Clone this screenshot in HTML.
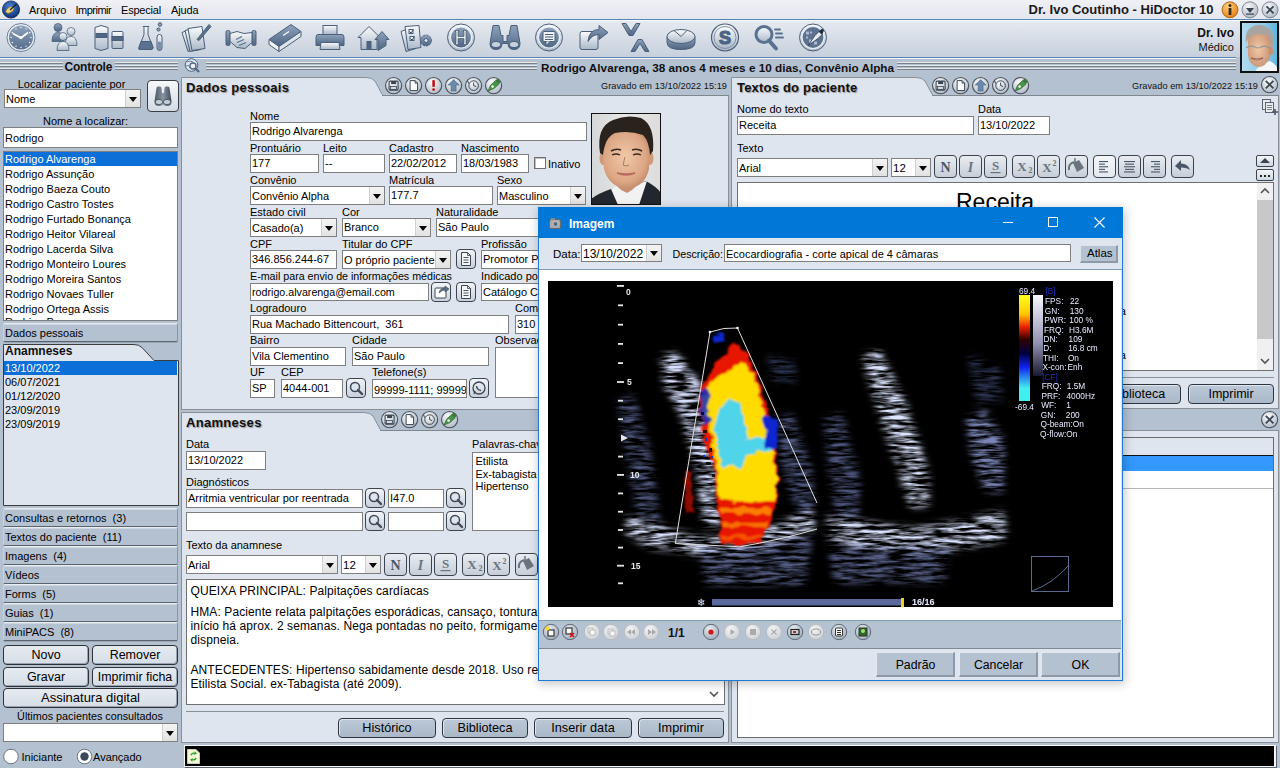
<!DOCTYPE html><html><head><meta charset="utf-8"><style>
html,body{margin:0;padding:0}
body{-webkit-font-smoothing:antialiased;width:1280px;height:768px;position:relative;overflow:hidden;background:#b4c1d1;font-family:'Liberation Sans',sans-serif;font-size:11px;color:#000}
.a{position:absolute}
.t{position:absolute;white-space:pre;line-height:normal}
svg{position:absolute;overflow:visible}
</style></head><body>
<div class=a style="left:0px;top:0px;width:1280px;height:19px;background:linear-gradient(#f0f0f6,#e4e6ee)"></div><div class=a style="left:0px;top:19px;width:1280px;height:1px;background:#5b84b4"></div><div class=a style="left:0px;top:20px;width:1280px;height:1px;background:#fbfcfd"></div><div class=a style="left:0px;top:21px;width:1280px;height:36px;background:linear-gradient(#e6eaf0,#d3dae4 60%,#c6d0dc)"></div><div class=a style="left:0px;top:57px;width:1236px;height:1px;background:#5b84b4"></div><div class=a style="left:0px;top:58px;width:1236px;height:1px;background:#f4f6f9"></div><div class=a style="left:181px;top:77px;width:548px;height:18px;background:#b4c1d1"></div><svg style='left:181px;top:77px' width='222' height='19'><path d='M0.5 19 L0.5 0.5 L185 0.5 Q191 0.5 194 4 L202 19 Z' fill='#dfe5ee' stroke='#8a8f96' stroke-width='1'/></svg><div class=a style="left:181px;top:95px;width:548px;height:315px;background:#dfe5ee;border:1px solid #8a8f96;border-top:1px solid #80868e;box-sizing:border-box"></div><svg style='left:181px;top:77px' width='210' height='20'><rect x='1' y='17' width='200' height='3' fill='#dfe5ee'/></svg><div class=a style="left:731px;top:77px;width:548px;height:18px;background:#b4c1d1"></div><svg style='left:731px;top:77px' width='222' height='19'><path d='M0.5 19 L0.5 0.5 L185 0.5 Q191 0.5 194 4 L202 19 Z' fill='#dfe5ee' stroke='#8a8f96' stroke-width='1'/></svg><div class=a style="left:731px;top:95px;width:548px;height:314px;background:#dfe5ee;border:1px solid #8a8f96;border-top:1px solid #80868e;box-sizing:border-box"></div><svg style='left:731px;top:77px' width='210' height='20'><rect x='1' y='17' width='200' height='3' fill='#dfe5ee'/></svg><div class=a style="left:181px;top:412px;width:548px;height:18px;background:#b4c1d1"></div><svg style='left:181px;top:412px' width='220' height='19'><path d='M0.5 19 L0.5 0.5 L183 0.5 Q189 0.5 192 4 L200 19 Z' fill='#dfe5ee' stroke='#8a8f96' stroke-width='1'/></svg><div class=a style="left:181px;top:430px;width:548px;height:313px;background:#dfe5ee;border:1px solid #8a8f96;border-top:1px solid #80868e;box-sizing:border-box"></div><svg style='left:181px;top:412px' width='208' height='20'><rect x='1' y='17' width='198' height='3' fill='#dfe5ee'/></svg><div class=a style="left:731px;top:409px;width:548px;height:22px;background:#b4c1d1"></div><div class=a style="left:731px;top:430px;width:548px;height:313px;background:#dfe5ee;border:1px solid #8a8f96;box-sizing:border-box"></div><div class=a style="left:184px;top:745px;width:1092px;height:22px;background:#f4f6f8;box-shadow:1px 1px 0 #5a6470"></div><div class=a style="left:185px;top:746px;width:1089px;height:20px;background:#000"></div><svg style='left:1px;top:0px' width='20' height='20'><defs><radialGradient id='apg' cx='0.45' cy='0.35' r='0.7'><stop offset='0' stop-color='#4a86d8'/><stop offset='1' stop-color='#0a2a6a'/></radialGradient></defs>
<circle cx='10' cy='9.5' r='8.6' fill='url(#apg)' stroke='#0c2450' stroke-width='0.8'/>
<path d='M4.5 12 Q6 7 11 6.5 L13 8.5 Q12 12.5 7 13.5 Z' fill='#f0d080' stroke='#8a6a20' stroke-width='0.6'/>
<path d='M9 10 L15.5 4' stroke='#222' stroke-width='1.3'/></svg><div class=t style="left:29px;top:4.04px;font-size:11px;font-weight:normal;color:#000;">Arquivo</div><div class=t style="left:75.5px;top:4.04px;font-size:11px;font-weight:normal;color:#000;letter-spacing:-0.5px;">Imprimir</div><div class=t style="left:121px;top:4.04px;font-size:11px;font-weight:normal;color:#000;letter-spacing:-0.2px;">Especial</div><div class=t style="left:171px;top:4.04px;font-size:11px;font-weight:normal;color:#000;letter-spacing:-0.1px;">Ajuda</div><div class=t style="right:66.5px;top:2.23px;font-size:13px;font-weight:bold;color:#1a1a1a;">Dr. Ivo Coutinho - HiDoctor 10</div><svg style='left:1220px;top:0px' width='60' height='20'>
<defs><radialGradient id='og' cx='0.4' cy='0.3' r='0.8'><stop offset='0' stop-color='#ffd08a'/><stop offset='1' stop-color='#e07800'/></radialGradient>
<radialGradient id='sg' cx='0.4' cy='0.3' r='0.8'><stop offset='0' stop-color='#f6f8fa'/><stop offset='1' stop-color='#a8b2be'/></radialGradient></defs>
<circle cx='10' cy='9.8' r='8' fill='url(#og)' stroke='#a05800' stroke-width='0.8'/>
<rect x='8.6' y='8' width='2.8' height='7' fill='#3a2a10'/><circle cx='10' cy='5.4' r='1.5' fill='#3a2a10'/>
<circle cx='30' cy='9.8' r='8' fill='url(#sg)' stroke='#6a7480' stroke-width='0.8'/>
<path d='M26 8 L34 8 L30 13 Z' fill='#3a4450'/><rect x='26' y='13.5' width='8' height='1.2' fill='#3a4450'/>
<circle cx='50' cy='9.8' r='8' fill='url(#sg)' stroke='#6a7480' stroke-width='0.8'/>
<path d='M46.5 6.3 L53.5 13.3 M53.5 6.3 L46.5 13.3' stroke='#3a4450' stroke-width='1.8'/>
</svg><svg style='left:0px;top:19px' width='840' height='38' viewBox='0 19 840 38'><defs>
<linearGradient id='dk' x1='0' y1='0' x2='0' y2='1'><stop offset='0' stop-color='#8fa3bb'/><stop offset='1' stop-color='#4d6584'/></linearGradient>
<linearGradient id='lt' x1='0' y1='0' x2='0' y2='1'><stop offset='0' stop-color='#fbfcfd'/><stop offset='1' stop-color='#aab8c8'/></linearGradient>
<linearGradient id='cl' x1='0' y1='0' x2='0' y2='1'><stop offset='0' stop-color='#8ea2ba'/><stop offset='1' stop-color='#566e8c'/></linearGradient>
</defs><g transform='translate(21,37.5)'><circle r='14' fill='#e9eef4' stroke='#6a7f99' stroke-width='1'/><circle r='12' fill='url(#cl)'/><path d='M-8 -4 L0 0.5 L7 -5' stroke='#fff' stroke-width='1.8' fill='none'/><circle r='1.6' fill='#fff'/><circle cx='10.00' cy='0.00' r='0.7' fill='#fff'/><circle cx='8.66' cy='5.00' r='0.7' fill='#fff'/><circle cx='5.00' cy='8.66' r='0.7' fill='#fff'/><circle cx='0.00' cy='10.00' r='0.7' fill='#fff'/><circle cx='-5.00' cy='8.66' r='0.7' fill='#fff'/><circle cx='-8.66' cy='5.00' r='0.7' fill='#fff'/><circle cx='-10.00' cy='0.00' r='0.7' fill='#fff'/><circle cx='-8.66' cy='-5.00' r='0.7' fill='#fff'/><circle cx='-5.00' cy='-8.66' r='0.7' fill='#fff'/><circle cx='-0.00' cy='-10.00' r='0.7' fill='#fff'/><circle cx='5.00' cy='-8.66' r='0.7' fill='#fff'/><circle cx='8.66' cy='-5.00' r='0.7' fill='#fff'/></g><g transform='translate(65,37.5)'><g stroke='#4a5f7a' stroke-width='0.8'><circle cx='-7' cy='-10' r='4' fill='url(#dk)'/><path d='M-13 4 Q-13 -5 -7 -5 Q-1 -5 -1 4 Z' fill='url(#dk)'/><circle cx='6' cy='-6' r='4' fill='url(#lt)'/><path d='M0 8 Q0 -1 6 -1 Q12 -1 12 8 Z' fill='url(#lt)'/><circle cx='-2' cy='-1' r='4' fill='url(#lt)'/><path d='M-8 13 Q-8 4 -2 4 Q4 4 4 13 Z' fill='url(#lt)'/></g></g><g transform='translate(109,37.5)'><g stroke='#4a5f7a' stroke-width='1'><path d='M-14 -10 L-8 -12 L-1 -10 L-1 11 L-8 13 L-14 11 Z' fill='url(#lt)'/><rect x='-13' y='-4' width='11' height='4' fill='#506784'/><rect x='3' y='-6' width='11' height='17' rx='1' fill='url(#lt)'/><rect x='3' y='-1' width='11' height='4' fill='#506784'/></g></g><g transform='translate(153,37.5)'><g stroke='#4a5f7a' stroke-width='1'><path d='M-10 -11 L-4 -11 L-5 -10 L-5 -3 L0 10 Q0 12 -2 12 L-13 12 Q-15 12 -14 10 L-9 -3 L-9 -10 Z' fill='url(#lt)'/><path d='M-12 4 L-2 4 L0 10 Q0 12 -2 12 L-13 12 Q-15 12 -14 10 Z' fill='#5a7290'/><rect x='4' y='-3' width='5' height='16' rx='2.5' fill='url(#lt)'/><rect x='4.5' y='4' width='4' height='8.5' rx='2' fill='#7890ac' stroke='none'/><circle cx='7' cy='-13' r='1.8' fill='#8fa3bb'/><circle cx='5.5' cy='-8' r='1.6' fill='#8fa3bb'/></g></g><g transform='translate(197,37.5)'><g stroke='#4a5f7a' stroke-width='1'><path d='M-15 -5 L-5 -9 L1 11 L-9 14 Z' fill='url(#lt)'/><path d='M-12 -7 L0 -10 L4 12 L-7 14 Z' fill='url(#lt)'/><path d='M-9 -9 L5 -11 L8 11 L-5 13 Z' fill='url(#lt)'/><path d='M0 2 L12 -13 L14 -11 L2 3 Z' fill='#5a7290'/></g></g><g transform='translate(241,37.5)'><g stroke='#4a5f7a' stroke-width='1'><rect x='-15' y='-7' width='4' height='15' rx='1.5' fill='url(#dk)'/><rect x='11' y='-7' width='4' height='15' rx='1.5' fill='url(#dk)'/><path d='M-11 -4 L-4 -6 L3 -4 L11 -5 L11 5 L4 11 L-4 10 L-11 4 Z' fill='url(#lt)'/><path d='M-5 2 L1 -1 M-4 5 L3 2 M-2 8 L5 5' stroke='#5a7290' stroke-width='1.3'/></g></g><g transform='translate(285,37.5)'><g stroke='#4a5f7a' stroke-width='1'><path d='M-16 2 L6 -13 L16 -6 L-6 9 Z' fill='url(#dk)'/><path d='M-16 2 L-6 9 L-6 14 L-16 7 Z' fill='#f4f6f8'/><path d='M-6 9 L16 -6 L16 -1 L-6 14 Z' fill='#dde3ea'/><path d='M-2 -2 L4 -6' stroke='#fff' stroke-width='1.2'/></g></g><g transform='translate(330,37.5)'><g stroke='#4a5f7a' stroke-width='1'><rect x='-7' y='-12' width='14' height='9' fill='url(#lt)'/><path d='M-12 -3 L12 -3 Q14 -3 14 0 L14 8 L-14 8 L-14 0 Q-14 -3 -12 -3 Z' fill='url(#dk)'/><path d='M-9 5 L9 5 L10 12 L-10 12 Z' fill='url(#lt)'/></g></g><g transform='translate(373,37.5)'><g stroke='#4a5f7a' stroke-width='1'><path d='M-15 0 L-4 -11 L7 0 L4 0 L4 12 L-12 12 L-12 0 Z' fill='url(#lt)'/><rect x='-6' y='4' width='4' height='8' fill='#4d6584'/><path d='M5 13 L5 2 L2 2 L9 -6 L16 2 L13 2 L13 8 Z' fill='url(#dk)'/></g></g><g transform='translate(417,37.5)'><g stroke='#4a5f7a' stroke-width='1'><path d='M-16 -6 L-6 -10 L-1 11 L-11 14 Z' fill='url(#lt)'/><path d='M-12 -11 L2 -12 L4 10 L-9 12 Z' fill='url(#lt)'/><rect x='-8' y='-8' width='4' height='4' fill='#fff'/><rect x='-7' y='-1' width='4' height='4' fill='#fff'/><path d='M-7.5 -6 L-6 -4.5 L-3.5 -8 M-6.5 1 L-5 2.5 L-2.5 -1' stroke='#344a66' fill='none'/><circle cx='9' cy='3' r='5.5' fill='url(#dk)' stroke-dasharray='2 1.2'/><circle cx='9' cy='3' r='2' fill='#e0e6ee'/></g></g><g transform='translate(461,37.5)'><circle r='13.5' fill='url(#lt)' stroke='#4a5f7a' stroke-width='1'/><circle r='10.5' fill='url(#dk)' stroke='#e8edf3' stroke-width='1.2'/><path d='M-6 -7 H-2 V-6 H-3 V-1 H3 V-6 H2 V-7 H6 V-6 H5 V6 H6 V7 H2 V6 H3 V1 H-3 V6 H-2 V7 H-6 V6 H-5 V-6 H-6 Z' fill='#eef2f6' stroke='#3a4a60' stroke-width='0.6'/></g><g transform='translate(505,37.5)'><g stroke='#4a5f7a' stroke-width='1'><path d='M-12 -12 L-6 -12 L-4 -2 L-2 -2 L-2 4 L2 4 L2 -2 L4 -2 L6 -12 L12 -12 L15 6 Q15 12 9 12 Q3 12 3 6 L-3 6 Q-3 12 -9 12 Q-15 12 -15 6 Z' fill='url(#dk)'/><ellipse cx='-9' cy='7' rx='4.5' ry='3' fill='#c8d2de'/><ellipse cx='9' cy='7' rx='4.5' ry='3' fill='#c8d2de'/></g></g><g transform='translate(549,37.5)'><circle r='13.5' fill='url(#lt)' stroke='#4a5f7a' stroke-width='1'/><circle r='10.5' fill='url(#dk)' stroke='#e8edf3' stroke-width='1.2'/><rect x='-6' y='-6' width='12' height='10' rx='1' fill='#eef2f6' stroke='#4a5f7a'/><path d='M-3 4 L-3 8 L1 4' fill='#eef2f6' stroke='#4a5f7a'/><path d='M-4 -3 H4 M-4 -0.5 H4 M-4 2 H4' stroke='#4a5f7a'/></g><g transform='translate(593,37.5)'><g stroke='#4a5f7a' stroke-width='1'><rect x='-13' y='-6' width='18' height='18' rx='2' fill='url(#lt)'/><path d='M-5 4 Q-4 -8 6 -8 L6 -12 L15 -5 L6 2 L6 -3 Q-1 -3 -5 4 Z' fill='url(#dk)'/></g></g><g transform='translate(637,37.5)'><g stroke='#4a5f7a' stroke-width='1'><path d='M-15 -14 L-11 -14 L-6 -6 L-1 -14 L3 -14 L-4 -2 L-8 -2 Z' fill='url(#dk)'/><path d='M-6 14 L-2 14 L3 6 L8 14 L12 14 L5 2 L1 2 Z' fill='url(#dk)'/></g></g><g transform='translate(681,37.5)'><g stroke='#4a5f7a' stroke-width='1'><path d='M-14 -1 L-14 5 Q-14 12 0 12 Q14 12 14 5 L14 -1' fill='url(#dk)'/><ellipse cx='0' cy='-1' rx='14' ry='7' fill='url(#lt)'/><path d='M-7 -7 L0 -1 L6 -7' fill='none'/></g></g><g transform='translate(725,37.5)'><circle r='13.5' fill='url(#lt)' stroke='#4a5f7a' stroke-width='1.2'/><circle r='11' fill='url(#lt)' stroke='#7d90a8' stroke-width='1'/><text x='0' y='6.5' text-anchor='middle' font-family='Liberation Sans' font-weight='bold' font-size='18' fill='#4d6584' stroke='#4d6584' stroke-width='1.2'>S</text></g><g transform='translate(769,37.5)'><g stroke='#4a5f7a' stroke-width='1'><circle cx='-5' cy='-3' r='8' fill='url(#lt)' stroke-width='3' stroke='#5a7290'/><path d='M0 3 L7 11' stroke='#5a7290' stroke-width='4' stroke-linecap='round'/><path d='M6 -8 H11 M7 -4 H13 M7 0 H14' stroke='#5a7290' stroke-width='2' stroke-linecap='round'/></g></g><g transform='translate(813,37.5)'><circle r='13.5' fill='url(#lt)' stroke='#4a5f7a' stroke-width='1'/><circle r='11' fill='#5d7290' stroke='#e8edf3' stroke-width='1.2'/><g fill='#aebbd0'><rect x='-7' y='-6' width='3' height='3'/><rect x='-3' y='-6' width='2' height='2'/><rect x='-7' y='-1' width='2' height='2'/><rect x='-4' y='2' width='3' height='3'/><rect x='1' y='4' width='3' height='3'/></g><path d='M-5 8 L2 -2 L6 -6 L9 -3 L5 1 Z' fill='#e8eef4' stroke='#2a3a50' stroke-width='0.8'/><path d='M6 -6 L9 -9 L11 -7 L9 -3' fill='#1e2a3a'/></g></svg><div class=t style="right:46px;top:26.14px;font-size:12px;font-weight:bold;color:#111;">Dr. Ivo</div><div class=t style="right:46px;top:41.05px;font-size:11px;font-weight:normal;color:#111;">Médico</div><svg style='left:1240px;top:21px' width='39' height='52' viewBox='0 0 39 52'><defs>
<linearGradient id='pbg' x1='0' y1='0' x2='1' y2='0'><stop offset='0' stop-color='#b4dcf0'/><stop offset='0.6' stop-color='#90c8e4'/><stop offset='1' stop-color='#58b4dc'/></linearGradient>
<radialGradient id='face' cx='0.45' cy='0.5' r='0.6'><stop offset='0' stop-color='#f0c8a8'/><stop offset='1' stop-color='#c89070'/></radialGradient>
<filter id='dbl'><feGaussianBlur stdDeviation='0.6'/></filter></defs>
<rect x='0' y='0' width='39' height='52' fill='url(#pbg)'/>
<g filter='url(#dbl)'>
<path d='M14 52 Q20 42 30 40 Q38 44 39 52 Z' fill='#f4f6f8'/>
<path d='M8 20 Q7 12 18 10 Q31 10 31 22 L30 36 Q26 46 18 46 Q9 44 8 34 Z' fill='url(#face)'/>
<ellipse cx='31' cy='30' rx='2.5' ry='4' fill='#c89070'/>
<path d='M6 22 Q4 6 18 4 Q34 4 34 22 L32 28 Q31 16 26 14 Q16 11 9 16 Z' fill='#a8a4a0'/>
<path d='M6 27 Q10 24 15 26 Q18 28 21 26 Q26 24 29 27' stroke='#909898' stroke-width='1.2' fill='none'/>
<path d='M11 37 Q17 41 23 37 Q17 39 11 37 Z' fill='#fff' stroke='#8a5040' stroke-width='0.8'/>
</g>
<rect x='1' y='1' width='37' height='50' fill='none' stroke='#111' stroke-width='2'/>
</svg><div class=a style="left:0px;top:62px;width:63px;height:1px;background:#e2e8ef"></div><div class=a style="left:0px;top:63px;width:63px;height:1px;background:#7d7f83"></div><div class=a style="left:0px;top:65px;width:63px;height:1px;background:#e2e8ef"></div><div class=a style="left:0px;top:66px;width:63px;height:1px;background:#7d7f83"></div><div class=a style="left:0px;top:68px;width:63px;height:1px;background:#e2e8ef"></div><div class=a style="left:0px;top:69px;width:63px;height:1px;background:#7d7f83"></div><div class=a style="left:115px;top:62px;width:65px;height:1px;background:#e2e8ef"></div><div class=a style="left:115px;top:63px;width:65px;height:1px;background:#7d7f83"></div><div class=a style="left:115px;top:65px;width:65px;height:1px;background:#e2e8ef"></div><div class=a style="left:115px;top:66px;width:65px;height:1px;background:#7d7f83"></div><div class=a style="left:115px;top:68px;width:65px;height:1px;background:#e2e8ef"></div><div class=a style="left:115px;top:69px;width:65px;height:1px;background:#7d7f83"></div><div class=t style="left:64.5px;top:60.14px;font-size:12px;font-weight:bold;color:#111;letter-spacing:-0.2px;">Controle</div><svg style='left:184px;top:58px' width='17' height='16'><circle cx='7.5' cy='7' r='6.3' fill='#dfe6ee' stroke='#4e6684' stroke-width='1'/><path d='M3 4 Q6 2 9 4 M2 8 Q5 6 6 10' stroke='#4e6684' fill='none' stroke-width='0.8'/><circle cx='9' cy='8' r='3' fill='#eef2f6' stroke='#4e6684' stroke-width='1.3'/><path d='M11 10 L15 14' stroke='#4e6684' stroke-width='2'/></svg><div class=a style="left:206px;top:62px;width:331px;height:1px;background:#e2e8ef"></div><div class=a style="left:206px;top:63px;width:331px;height:1px;background:#7d7f83"></div><div class=a style="left:206px;top:65px;width:331px;height:1px;background:#e2e8ef"></div><div class=a style="left:206px;top:66px;width:331px;height:1px;background:#7d7f83"></div><div class=a style="left:206px;top:68px;width:331px;height:1px;background:#e2e8ef"></div><div class=a style="left:206px;top:69px;width:331px;height:1px;background:#7d7f83"></div><div class=a style="left:897px;top:62px;width:339px;height:1px;background:#e2e8ef"></div><div class=a style="left:897px;top:63px;width:339px;height:1px;background:#7d7f83"></div><div class=a style="left:897px;top:65px;width:339px;height:1px;background:#e2e8ef"></div><div class=a style="left:897px;top:66px;width:339px;height:1px;background:#7d7f83"></div><div class=a style="left:897px;top:68px;width:339px;height:1px;background:#e2e8ef"></div><div class=a style="left:897px;top:69px;width:339px;height:1px;background:#7d7f83"></div><div class=t style="left:541px;top:60.87px;font-size:11.75px;font-weight:bold;color:#111;">Rodrigo Alvarenga, 38 anos 4 meses e 10 dias, Convênio Alpha</div><div class=a style="left:178px;top:59px;width:3px;height:709px;background:#b4c1d1"></div><div class=t style="left:-128.5px;width:400px;text-align:center;top:78.05px;font-size:11px;font-weight:normal;color:#000;">Localizar paciente por</div><div class=a style="left:4px;top:89px;width:137px;height:19px;background:#fff;border:1px solid #7f7f7f;box-sizing:border-box;"></div><div class=t style="left:6px;top:93.05px;font-size:11px;font-weight:normal;color:#000;">Nome</div><div class=a style="left:125px;top:90px;width:15px;height:17px;background:linear-gradient(#f4f4f4,#e2e2e2);border-left:1px solid #d0d0d0;box-sizing:border-box;"></div><div class=a style="left:128.5px;top:96.5px;width:0;height:0;border-left:4px solid transparent;border-right:4px solid transparent;border-top:5px solid #000"></div><div class=a style="left:147px;top:80px;width:32px;height:32px;background:linear-gradient(#f6f8fa,#d4dbe4);border:1px solid #3a3f46;border-radius:4px;box-sizing:border-box"></div><svg style='left:147px;top:80px' width='32' height='32'><defs><linearGradient id='bng' x1='0' y1='0' x2='1' y2='0'><stop offset='0' stop-color='#4a5664'/><stop offset='0.5' stop-color='#8a96a4'/><stop offset='1' stop-color='#3e4a58'/></linearGradient></defs>
<path d='M9.5 8 Q9.5 6.5 11 6.5 L13 6.5 Q14.5 6.5 14.5 8 L15 13 L17 13 L17.5 8 Q17.5 6.5 19 6.5 L21 6.5 Q22.5 6.5 22.5 8 L24.5 21 Q25 26 20 26 Q15.5 26 15.5 22 L16.5 22 Q16.5 20 15 20 Q13.5 20 13.5 22 L16.5 22 Q16.5 26 12 26 Q7 26 7.5 21 Z' fill='url(#bng)'/>
<ellipse cx='12' cy='22' rx='3.8' ry='2.6' fill='#c4ccd6' stroke='#3e4a58' stroke-width='0.8'/><ellipse cx='20' cy='22' rx='3.8' ry='2.6' fill='#c4ccd6' stroke='#3e4a58' stroke-width='0.8'/></svg><div class=t style="left:-114.5px;width:400px;text-align:center;top:115.05px;font-size:11px;font-weight:normal;color:#000;">Nome a localizar:</div><div class=a style="left:3px;top:127px;width:175px;height:21px;background:#fff;border:1px solid #7f7f7f;box-sizing:border-box;"></div><div class=t style="left:5px;top:132.04px;font-size:11px;font-weight:normal;color:#000;">Rodrigo</div><div class=a style="left:3px;top:151px;width:175px;height:170px;background:#fff;border:1px solid #7f7f7f;box-sizing:border-box;overflow:hidden"></div><div class=a style="left:4px;top:152px;width:173px;height:14px;background:#0a6fd6"></div><div class=t style="left:5px;top:153.04px;font-size:11px;font-weight:normal;color:#fff;">Rodrigo Alvarenga</div><div class=t style="left:5px;top:168.04px;font-size:11px;font-weight:normal;color:#000;">Rodrigo Assunção</div><div class=t style="left:5px;top:183.04px;font-size:11px;font-weight:normal;color:#000;">Rodrigo Baeza Couto</div><div class=t style="left:5px;top:198.04px;font-size:11px;font-weight:normal;color:#000;">Rodrigo Castro Tostes</div><div class=t style="left:5px;top:213.04px;font-size:11px;font-weight:normal;color:#000;">Rodrigo Furtado Bonança</div><div class=t style="left:5px;top:228.04px;font-size:11px;font-weight:normal;color:#000;">Rodrigo Heitor Vilareal</div><div class=t style="left:5px;top:243.04px;font-size:11px;font-weight:normal;color:#000;">Rodrigo Lacerda Silva</div><div class=t style="left:5px;top:258.05px;font-size:11px;font-weight:normal;color:#000;">Rodrigo Monteiro Loures</div><div class=t style="left:5px;top:273.05px;font-size:11px;font-weight:normal;color:#000;">Rodrigo Moreira Santos</div><div class=t style="left:5px;top:288.05px;font-size:11px;font-weight:normal;color:#000;">Rodrigo Novaes Tuller</div><div class=t style="left:5px;top:303.05px;font-size:11px;font-weight:normal;color:#000;">Rodrigo Ortega Assis</div><div class=a style='left:4px;top:316px;width:173px;height:4px;overflow:hidden'><div class=t style='left:1px;top:-0.3px;font-size:11px'>Rodrigo Pessoa</div></div><div class=a style="left:3px;top:323px;width:175px;height:19px;background:#b4c1d1;border-top:1px solid #e8edf2;border-left:1px solid #c8d2dc;border-right:1px solid #8a96a4;border-bottom:1px solid #5a636e;border-radius:2px;box-sizing:border-box;box-shadow:inset 0 1px 0 #cdd6e0, 0 1px 0 #9aa6b4"></div><div class=t style="left:5px;top:327.05px;font-size:11px;font-weight:normal;color:#000;">Dados pessoais</div><svg style='left:3px;top:343px' width='176' height='163'><path d='M0.5 162.5 L0.5 1.5 L131 1.5 Q136 1.5 139 4.5 L151 17.5 L175.5 17.5 L175.5 162.5 Z' fill='#dfe5ee' stroke='#3c3c3c' stroke-width='1'/></svg><div class=a style="left:4px;top:361px;width:173px;height:1px;background:#222"></div><div class=t style="left:5px;top:344.14px;font-size:12px;font-weight:bold;color:#111;">Anamneses</div><div class=a style="left:4px;top:361px;width:173px;height:14px;background:#0a6fd6"></div><div class=t style="left:5px;top:362.05px;font-size:11px;font-weight:normal;color:#fff;">13/10/2022</div><div class=t style="left:5px;top:376.05px;font-size:11px;font-weight:normal;color:#000;">06/07/2021</div><div class=t style="left:5px;top:390.05px;font-size:11px;font-weight:normal;color:#000;">01/12/2020</div><div class=t style="left:5px;top:404.05px;font-size:11px;font-weight:normal;color:#000;">23/09/2019</div><div class=t style="left:5px;top:418.05px;font-size:11px;font-weight:normal;color:#000;">23/09/2019</div><div class=a style="left:3px;top:508px;width:175px;height:19px;background:#b4c1d1;border-top:1px solid #e8edf2;border-left:1px solid #c8d2dc;border-right:1px solid #8a96a4;border-bottom:1px solid #5a636e;border-radius:2px;box-sizing:border-box;box-shadow:inset 0 1px 0 #cdd6e0, 0 1px 0 #9aa6b4"></div><div class=t style="left:5px;top:512.04px;font-size:11px;font-weight:normal;color:#000;">Consultas e retornos  (3)</div><div class=a style="left:3px;top:527px;width:175px;height:19px;background:#b4c1d1;border-top:1px solid #e8edf2;border-left:1px solid #c8d2dc;border-right:1px solid #8a96a4;border-bottom:1px solid #5a636e;border-radius:2px;box-sizing:border-box;box-shadow:inset 0 1px 0 #cdd6e0, 0 1px 0 #9aa6b4"></div><div class=t style="left:5px;top:531.04px;font-size:11px;font-weight:normal;color:#000;">Textos do paciente  (11)</div><div class=a style="left:3px;top:546px;width:175px;height:19px;background:#b4c1d1;border-top:1px solid #e8edf2;border-left:1px solid #c8d2dc;border-right:1px solid #8a96a4;border-bottom:1px solid #5a636e;border-radius:2px;box-sizing:border-box;box-shadow:inset 0 1px 0 #cdd6e0, 0 1px 0 #9aa6b4"></div><div class=t style="left:5px;top:550.04px;font-size:11px;font-weight:normal;color:#000;">Imagens  (4)</div><div class=a style="left:3px;top:565px;width:175px;height:19px;background:#b4c1d1;border-top:1px solid #e8edf2;border-left:1px solid #c8d2dc;border-right:1px solid #8a96a4;border-bottom:1px solid #5a636e;border-radius:2px;box-sizing:border-box;box-shadow:inset 0 1px 0 #cdd6e0, 0 1px 0 #9aa6b4"></div><div class=t style="left:5px;top:569.04px;font-size:11px;font-weight:normal;color:#000;">Vídeos</div><div class=a style="left:3px;top:584px;width:175px;height:19px;background:#b4c1d1;border-top:1px solid #e8edf2;border-left:1px solid #c8d2dc;border-right:1px solid #8a96a4;border-bottom:1px solid #5a636e;border-radius:2px;box-sizing:border-box;box-shadow:inset 0 1px 0 #cdd6e0, 0 1px 0 #9aa6b4"></div><div class=t style="left:5px;top:588.04px;font-size:11px;font-weight:normal;color:#000;">Forms  (5)</div><div class=a style="left:3px;top:603px;width:175px;height:19px;background:#b4c1d1;border-top:1px solid #e8edf2;border-left:1px solid #c8d2dc;border-right:1px solid #8a96a4;border-bottom:1px solid #5a636e;border-radius:2px;box-sizing:border-box;box-shadow:inset 0 1px 0 #cdd6e0, 0 1px 0 #9aa6b4"></div><div class=t style="left:5px;top:607.04px;font-size:11px;font-weight:normal;color:#000;">Guias  (1)</div><div class=a style="left:3px;top:622px;width:175px;height:19px;background:#b4c1d1;border-top:1px solid #e8edf2;border-left:1px solid #c8d2dc;border-right:1px solid #8a96a4;border-bottom:1px solid #5a636e;border-radius:2px;box-sizing:border-box;box-shadow:inset 0 1px 0 #cdd6e0, 0 1px 0 #9aa6b4"></div><div class=t style="left:5px;top:626.04px;font-size:11px;font-weight:normal;color:#000;">MiniPACS  (8)</div><div class=a style="left:3px;top:645px;width:86px;height:20px;background:linear-gradient(#e6ebf1,#d6dde6);border:1px solid #2e3238;border-radius:4px;box-sizing:border-box;box-shadow:inset -1px -1px 0 #9aa4b0"></div><div class=t style="left:-154.0px;width:400px;text-align:center;top:647.69px;font-size:12.5px;font-weight:normal;color:#000;">Novo</div><div class=a style="left:92px;top:645px;width:86px;height:20px;background:linear-gradient(#e6ebf1,#d6dde6);border:1px solid #2e3238;border-radius:4px;box-sizing:border-box;box-shadow:inset -1px -1px 0 #9aa4b0"></div><div class=t style="left:-65.0px;width:400px;text-align:center;top:647.69px;font-size:12.5px;font-weight:normal;color:#000;">Remover</div><div class=a style="left:3px;top:667px;width:86px;height:20px;background:linear-gradient(#e6ebf1,#d6dde6);border:1px solid #2e3238;border-radius:4px;box-sizing:border-box;box-shadow:inset -1px -1px 0 #9aa4b0"></div><div class=t style="left:-154.0px;width:400px;text-align:center;top:669.69px;font-size:12.5px;font-weight:normal;color:#000;">Gravar</div><div class=a style="left:92px;top:667px;width:86px;height:20px;background:linear-gradient(#e6ebf1,#d6dde6);border:1px solid #2e3238;border-radius:4px;box-sizing:border-box;box-shadow:inset -1px -1px 0 #9aa4b0"></div><div class=t style="left:-65.0px;width:400px;text-align:center;top:669.78px;font-size:12.4px;font-weight:normal;color:#000;">Imprimir ficha</div><div class=a style="left:3px;top:688px;width:175px;height:20px;background:linear-gradient(#e6ebf1,#d6dde6);border:1px solid #2e3238;border-radius:4px;box-sizing:border-box;box-shadow:inset -1px -1px 0 #9aa4b0"></div><div class=t style="left:-109.5px;width:400px;text-align:center;top:690.24px;font-size:13px;font-weight:normal;color:#000;">Assinatura digital</div><div class=t style="left:-110.0px;width:400px;text-align:center;top:710.23px;font-size:10.8px;font-weight:normal;color:#000;">Últimos pacientes consultados</div><div class=a style="left:3px;top:723px;width:175px;height:19px;background:#fff;border:1px solid #7f7f7f;box-sizing:border-box;"></div><div class=a style="left:162px;top:724px;width:15px;height:17px;background:linear-gradient(#f4f4f4,#e2e2e2);border-left:1px solid #d0d0d0;box-sizing:border-box;"></div><div class=a style="left:165.5px;top:730.5px;width:0;height:0;border-left:4px solid transparent;border-right:4px solid transparent;border-top:5px solid #000"></div><svg style='left:2px;top:748px' width='95' height='18'><circle cx='9' cy='8.5' r='7.3' fill='#fff' stroke='#6a7480' stroke-width='1'/><circle cx='82.5' cy='8.5' r='7.3' fill='#fff' stroke='#6a7480' stroke-width='1'/><circle cx='82.5' cy='8.5' r='4.2' fill='#3d4a5a'/></svg><div class=t style="left:21.5px;top:751.04px;font-size:11px;font-weight:normal;color:#000;">Iniciante</div><div class=t style="left:93px;top:751.04px;font-size:11px;font-weight:normal;color:#000;">Avançado</div><div class=t style="left:186px;top:80.23px;font-size:13px;font-weight:bold;color:#111;letter-spacing:0.3px;text-shadow:1px 1px 1px rgba(0,0,0,0.35)">Dados pessoais</div><svg style='left:383.9px;top:75.9px' width='19.2' height='19.2' viewBox='-9.6 -9.6 19.2 19.2'><defs><radialGradient id='pg393.5_85.5' cx='0.4' cy='0.3' r='0.85'><stop offset='0' stop-color='#fbfcfd'/><stop offset='1' stop-color='#a3aebb'/></radialGradient></defs><circle r='8.1' fill='url(#pg393.5_85.5)' stroke='#4a525c' stroke-width='1.1'/><rect x='-4.5' y='-4.5' width='9' height='9' rx='1' fill='none' stroke='#3a4654' stroke-width='1.1'/><rect x='-2.5' y='-4.5' width='5' height='3' fill='#3a4654'/><rect x='-3' y='1' width='6' height='3' fill='none' stroke='#3a4654' stroke-width='0.8'/></svg><svg style='left:403.9px;top:75.9px' width='19.2' height='19.2' viewBox='-9.6 -9.6 19.2 19.2'><defs><radialGradient id='pg413.5_85.5' cx='0.4' cy='0.3' r='0.85'><stop offset='0' stop-color='#fbfcfd'/><stop offset='1' stop-color='#a3aebb'/></radialGradient></defs><circle r='8.1' fill='url(#pg413.5_85.5)' stroke='#4a525c' stroke-width='1.1'/><path d='M-3.5 -5 L1.5 -5 L4 -2.5 L4 5 L-3.5 5 Z' fill='#fff' stroke='#3a4654' stroke-width='1'/><path d='M1.5 -5 L1.5 -2.5 L4 -2.5' fill='none' stroke='#3a4654'/></svg><svg style='left:423.9px;top:75.9px' width='19.2' height='19.2' viewBox='-9.6 -9.6 19.2 19.2'><defs><radialGradient id='pg433.5_85.5' cx='0.4' cy='0.3' r='0.85'><stop offset='0' stop-color='#fbfcfd'/><stop offset='1' stop-color='#a3aebb'/></radialGradient></defs><circle r='8.1' fill='url(#pg433.5_85.5)' stroke='#4a525c' stroke-width='1.1'/><rect x='-1.3' y='-5.5' width='2.6' height='7' rx='1' fill='#c41010'/><circle cy='4' r='1.4' fill='#c41010'/></svg><svg style='left:443.9px;top:75.9px' width='19.2' height='19.2' viewBox='-9.6 -9.6 19.2 19.2'><defs><radialGradient id='pg453.5_85.5' cx='0.4' cy='0.3' r='0.85'><stop offset='0' stop-color='#fbfcfd'/><stop offset='1' stop-color='#a3aebb'/></radialGradient></defs><circle r='8.1' fill='url(#pg453.5_85.5)' stroke='#4a525c' stroke-width='1.1'/><path d='M0 -6 L5.5 -0.5 L2.5 -0.5 L2.5 5.5 L-2.5 5.5 L-2.5 -0.5 L-5.5 -0.5 Z' fill='#6a8aac' stroke='#3d5a78' stroke-width='0.5'/></svg><svg style='left:463.9px;top:75.9px' width='19.2' height='19.2' viewBox='-9.6 -9.6 19.2 19.2'><defs><radialGradient id='pg473.5_85.5' cx='0.4' cy='0.3' r='0.85'><stop offset='0' stop-color='#fbfcfd'/><stop offset='1' stop-color='#a3aebb'/></radialGradient></defs><circle r='8.1' fill='url(#pg473.5_85.5)' stroke='#4a525c' stroke-width='1.1'/><circle r='4.8' fill='none' stroke='#3a4654' stroke-width='1'/><path d='M0 -3 L0 0 L2.5 1' stroke='#3a4654' fill='none'/><path d='M-5 -2 L-6 -5' stroke='#3a4654'/></svg><svg style='left:483.9px;top:75.9px' width='19.2' height='19.2' viewBox='-9.6 -9.6 19.2 19.2'><defs><radialGradient id='pg493.5_85.5' cx='0.4' cy='0.3' r='0.85'><stop offset='0' stop-color='#fbfcfd'/><stop offset='1' stop-color='#a3aebb'/></radialGradient></defs><circle r='8.1' fill='url(#pg493.5_85.5)' stroke='#4a525c' stroke-width='1.1'/><path d='M-5.5 5.5 L-3 -0.5 L2 -5 L5.5 -1.5 L0.5 3 Z' fill='#4a944a' stroke='#2a5e2a' stroke-width='0.6'/><circle cx='-1' cy='1' r='1.3' fill='#e8f0e8'/><path d='M2 -5 L4 -7 L7 -4 L5.5 -1.5' fill='#3a7a3a'/></svg><div class=t style="right:553px;top:80.67px;font-size:9.2px;font-weight:normal;color:#111;letter-spacing:0.05px;">Gravado em 13/10/2022 15:19</div><div class=t style="left:250px;top:110.05px;font-size:11px;font-weight:normal;color:#000;">Nome</div><div class=a style="left:250px;top:122px;width:337px;height:19px;background:#fff;border:1px solid #7f7f7f;box-sizing:border-box;"></div><div class=t style="left:252px;top:125.05px;font-size:11px;font-weight:normal;color:#000;">Rodrigo Alvarenga</div><div class=t style="left:250px;top:142.04px;font-size:11px;font-weight:normal;color:#000;">Prontuário</div><div class=a style="left:250px;top:154px;width:69px;height:19px;background:#fff;border:1px solid #7f7f7f;box-sizing:border-box;"></div><div class=t style="left:252px;top:157.04px;font-size:11px;font-weight:normal;color:#000;">177</div><div class=t style="left:323px;top:142.04px;font-size:11px;font-weight:normal;color:#000;">Leito</div><div class=a style="left:323px;top:154px;width:62px;height:19px;background:#fff;border:1px solid #7f7f7f;box-sizing:border-box;"></div><div class=t style="left:325px;top:157.04px;font-size:11px;font-weight:normal;color:#000;">--</div><div class=t style="left:389px;top:142.04px;font-size:11px;font-weight:normal;color:#000;">Cadastro</div><div class=a style="left:389px;top:154px;width:68px;height:19px;background:#fff;border:1px solid #7f7f7f;box-sizing:border-box;"></div><div class=t style="left:391px;top:157.04px;font-size:11px;font-weight:normal;color:#000;">22/02/2012</div><div class=t style="left:461px;top:142.04px;font-size:11px;font-weight:normal;color:#000;">Nascimento</div><div class=a style="left:461px;top:154px;width:68px;height:19px;background:#fff;border:1px solid #7f7f7f;box-sizing:border-box;"></div><div class=t style="left:463px;top:157.04px;font-size:11px;font-weight:normal;color:#000;">18/03/1983</div><div class=a style="left:534px;top:157px;width:12px;height:12px;background:#fff;border:1px solid #707070;box-sizing:border-box;box-shadow:inset 1px 1px 0 #c0c0c0"></div><div class=t style="left:548px;top:158.04px;font-size:11px;font-weight:normal;color:#000;">Inativo</div><div class=t style="left:250px;top:174.04px;font-size:11px;font-weight:normal;color:#000;">Convênio</div><div class=a style="left:250px;top:186px;width:135px;height:19px;background:#fff;border:1px solid #7f7f7f;box-sizing:border-box;"></div><div class=t style="left:252px;top:189.54px;font-size:11px;font-weight:normal;color:#000;">Convênio Alpha</div><div class=a style="left:369px;top:187px;width:15px;height:17px;background:linear-gradient(#f4f4f4,#e2e2e2);border-left:1px solid #d0d0d0;box-sizing:border-box;"></div><div class=a style="left:372.5px;top:193.5px;width:0;height:0;border-left:4px solid transparent;border-right:4px solid transparent;border-top:5px solid #000"></div><div class=t style="left:389px;top:174.04px;font-size:11px;font-weight:normal;color:#000;">Matrícula</div><div class=a style="left:389px;top:186px;width:104px;height:19px;background:#fff;border:1px solid #7f7f7f;box-sizing:border-box;"></div><div class=t style="left:391px;top:189.04px;font-size:11px;font-weight:normal;color:#000;">177.7</div><div class=t style="left:497px;top:174.04px;font-size:11px;font-weight:normal;color:#000;">Sexo</div><div class=a style="left:497px;top:186px;width:89px;height:19px;background:#fff;border:1px solid #7f7f7f;box-sizing:border-box;"></div><div class=t style="left:499px;top:189.54px;font-size:11px;font-weight:normal;color:#000;">Masculino</div><div class=a style="left:570px;top:187px;width:15px;height:17px;background:linear-gradient(#f4f4f4,#e2e2e2);border-left:1px solid #d0d0d0;box-sizing:border-box;"></div><div class=a style="left:573.5px;top:193.5px;width:0;height:0;border-left:4px solid transparent;border-right:4px solid transparent;border-top:5px solid #000"></div><svg style='left:591px;top:113px' width='70' height='92' viewBox='0 0 70 92'><defs>
<linearGradient id='pbk' x1='0' y1='0' x2='1' y2='0'><stop offset='0' stop-color='#d4d6d8'/><stop offset='0.5' stop-color='#e8e8e8'/><stop offset='1' stop-color='#dcdcdc'/></linearGradient>
<radialGradient id='pf' cx='0.48' cy='0.45' r='0.62'><stop offset='0' stop-color='#f0c8aa'/><stop offset='0.7' stop-color='#dca684'/><stop offset='1' stop-color='#b88060'/></radialGradient>
<filter id='pbl'><feGaussianBlur stdDeviation='0.7'/></filter></defs>
<rect x='0' y='0' width='70' height='92' fill='url(#pbk)'/>
<g filter='url(#pbl)'>
<path d='M0 92 L0 86 Q8 80 20 76 L30 72 L42 72 L55 68 Q66 74 70 80 L70 92 Z' fill='#22262e'/>
<path d='M20 76 Q28 70 42 72 L56 68 L48 92 L27 92 Z' fill='#f2f2f2'/>
<path d='M22 62 Q24 76 36 80 Q46 76 50 62 Z' fill='#c89070'/>
<ellipse cx='12' cy='45' rx='3.5' ry='7' fill='#d09a78'/>
<ellipse cx='59' cy='45' rx='3.5' ry='7' fill='#d09a78'/>
<path d='M11 34 Q11 18 35 18 Q60 18 59 34 L58 56 Q54 74 36 76 Q18 74 13 56 Z' fill='url(#pf)'/>
<path d='M9 40 Q5 14 22 7 Q36 1 50 5 Q64 12 62 38 L59 42 Q58 28 52 22 Q38 17 24 20 Q14 24 12 42 Z' fill='#2c221c'/>
<path d='M20 38 Q25 35 30 37 M41 37 Q46 35 51 38' stroke='#3a2a20' stroke-width='1.6' fill='none'/>
<path d='M21 42 Q25 40 29 42 M42 42 Q46 40 50 42' stroke='#3a2a22' stroke-width='1.3' fill='none'/>
<path d='M34 44 L32 52 Q35 54 38 52' stroke='#b07858' stroke-width='1' fill='none'/>
<path d='M26 60 Q35 64 44 60 Q35 62 26 60 Z' fill='#b86a60' stroke='#b86a60' stroke-width='1.4'/>
</g>
<rect x='0.5' y='0.5' width='69' height='91' fill='none' stroke='#111'/>
</svg><div class=t style="left:250px;top:206.04px;font-size:11px;font-weight:normal;color:#000;">Estado civil</div><div class=a style="left:250px;top:218px;width:87px;height:19px;background:#fff;border:1px solid #7f7f7f;box-sizing:border-box;"></div><div class=t style="left:252px;top:221.54px;font-size:11px;font-weight:normal;color:#000;">Casado(a)</div><div class=a style="left:321px;top:219px;width:15px;height:17px;background:linear-gradient(#f4f4f4,#e2e2e2);border-left:1px solid #d0d0d0;box-sizing:border-box;"></div><div class=a style="left:324.5px;top:225.5px;width:0;height:0;border-left:4px solid transparent;border-right:4px solid transparent;border-top:5px solid #000"></div><div class=t style="left:342px;top:206.04px;font-size:11px;font-weight:normal;color:#000;">Cor</div><div class=a style="left:342px;top:218px;width:89px;height:19px;background:#fff;border:1px solid #7f7f7f;box-sizing:border-box;"></div><div class=t style="left:344px;top:221.04px;font-size:11px;font-weight:normal;color:#000;">Branco</div><div class=a style="left:415px;top:219px;width:15px;height:17px;background:linear-gradient(#f4f4f4,#e2e2e2);border-left:1px solid #d0d0d0;box-sizing:border-box;"></div><div class=a style="left:418.5px;top:225.5px;width:0;height:0;border-left:4px solid transparent;border-right:4px solid transparent;border-top:5px solid #000"></div><div class=t style="left:436px;top:206.04px;font-size:11px;font-weight:normal;color:#000;">Naturalidade</div><div class=a style="left:436px;top:218px;width:124px;height:19px;background:#fff;border:1px solid #7f7f7f;box-sizing:border-box;"></div><div class=t style="left:438px;top:221.04px;font-size:11px;font-weight:normal;color:#000;">São Paulo</div><div class=t style="left:250px;top:238.04px;font-size:11px;font-weight:normal;color:#000;">CPF</div><div class=a style="left:250px;top:250px;width:87px;height:19px;background:#fff;border:1px solid #7f7f7f;box-sizing:border-box;"></div><div class=t style="left:252px;top:253.04px;font-size:11px;font-weight:normal;color:#000;">346.856.244-67</div><div class=t style="left:342px;top:238.04px;font-size:11px;font-weight:normal;color:#000;">Titular do CPF</div><div class=a style="left:342px;top:250px;width:109px;height:19px;background:#fff;border:1px solid #7f7f7f;box-sizing:border-box;"></div><div class=t style="left:344px;top:253.54px;font-size:11px;font-weight:normal;color:#000;">O próprio paciente</div><div class=a style="left:435px;top:251px;width:15px;height:17px;background:linear-gradient(#f4f4f4,#e2e2e2);border-left:1px solid #d0d0d0;box-sizing:border-box;"></div><div class=a style="left:438.5px;top:257.5px;width:0;height:0;border-left:4px solid transparent;border-right:4px solid transparent;border-top:5px solid #000"></div><div class=a style="left:456px;top:249px;width:20px;height:20px;background:linear-gradient(#f2f5f8,#c8d0da);border:1px solid #3c4450;border-radius:4px;box-sizing:border-box"></div><svg style='left:456px;top:249px' width='20' height='20' viewBox='0 0 20 20'><path d='M5.5 3.5 L11.5 3.5 L14.5 6.5 L14.5 16.5 L5.5 16.5 Z' fill='#f4f6f8' stroke='#3a4654' stroke-width='1'/><path d='M11.5 3.5 L11.5 6.5 L14.5 6.5' fill='none' stroke='#3a4654' stroke-width='0.8'/><path d='M7.5 8.5 H12.5 M7.5 11 H12.5 M7.5 13.5 H12.5' stroke='#3a4654' stroke-width='0.9'/></svg><div class=t style="left:481px;top:238.04px;font-size:11px;font-weight:normal;color:#000;">Profissão</div><div class=a style="left:481px;top:250px;width:79px;height:19px;background:#fff;border:1px solid #7f7f7f;box-sizing:border-box;"></div><div class=t style="left:483px;top:253.04px;font-size:11px;font-weight:normal;color:#000;">Promotor Público</div><div class=t style="left:250px;top:270.32px;font-size:10.7px;font-weight:normal;color:#000;">E-mail para envio de informações médicas</div><div class=a style="left:250px;top:283px;width:179px;height:18px;background:#fff;border:1px solid #7f7f7f;box-sizing:border-box;"></div><div class=t style="left:252px;top:286.32px;font-size:10.7px;font-weight:normal;color:#000;">rodrigo.alvarenga@email.com</div><div class=a style="left:431px;top:282px;width:20px;height:20px;background:linear-gradient(#f2f5f8,#c8d0da);border:1px solid #3c4450;border-radius:4px;box-sizing:border-box"></div><svg style='left:431px;top:282px' width='20' height='20' viewBox='0 0 20 20'><rect x='4' y='6' width='11' height='10' rx='1' fill='#fff' stroke='#3a4654'/><path d='M8 11 Q9 6 14 6 L14 4 L18 7 L14 10 L14 8 Q11 8 8 11 Z' fill='#5a6e88' stroke='#3a4654' stroke-width='0.6'/></svg><div class=a style="left:456px;top:282px;width:20px;height:20px;background:linear-gradient(#f2f5f8,#c8d0da);border:1px solid #3c4450;border-radius:4px;box-sizing:border-box"></div><svg style='left:456px;top:282px' width='20' height='20' viewBox='0 0 20 20'><path d='M5.5 3.5 L11.5 3.5 L14.5 6.5 L14.5 16.5 L5.5 16.5 Z' fill='#f4f6f8' stroke='#3a4654' stroke-width='1'/><path d='M11.5 3.5 L11.5 6.5 L14.5 6.5' fill='none' stroke='#3a4654' stroke-width='0.8'/><path d='M7.5 8.5 H12.5 M7.5 11 H12.5 M7.5 13.5 H12.5' stroke='#3a4654' stroke-width='0.9'/></svg><div class=t style="left:481px;top:270.05px;font-size:11px;font-weight:normal;color:#000;">Indicado por</div><div class=a style="left:481px;top:283px;width:79px;height:18px;background:#fff;border:1px solid #7f7f7f;box-sizing:border-box;"></div><div class=t style="left:483px;top:286.05px;font-size:11px;font-weight:normal;color:#000;">Catálogo Comercial</div><div class=t style="left:250px;top:302.05px;font-size:11px;font-weight:normal;color:#000;">Logradouro</div><div class=a style="left:250px;top:315px;width:259px;height:19px;background:#fff;border:1px solid #7f7f7f;box-sizing:border-box;"></div><div class=t style="left:252px;top:318.05px;font-size:11px;font-weight:normal;color:#000;">Rua Machado Bittencourt,  361</div><div class=t style="left:515px;top:302.05px;font-size:11px;font-weight:normal;color:#000;">Complemento</div><div class=a style="left:515px;top:315px;width:45px;height:19px;background:#fff;border:1px solid #7f7f7f;box-sizing:border-box;"></div><div class=t style="left:517px;top:318.05px;font-size:11px;font-weight:normal;color:#000;">310</div><div class=t style="left:250px;top:334.05px;font-size:11px;font-weight:normal;color:#000;">Bairro</div><div class=a style="left:250px;top:347px;width:96px;height:19px;background:#fff;border:1px solid #7f7f7f;box-sizing:border-box;"></div><div class=t style="left:252px;top:350.05px;font-size:11px;font-weight:normal;color:#000;">Vila Clementino</div><div class=t style="left:352px;top:334.05px;font-size:11px;font-weight:normal;color:#000;">Cidade</div><div class=a style="left:352px;top:347px;width:137px;height:19px;background:#fff;border:1px solid #7f7f7f;box-sizing:border-box;"></div><div class=t style="left:354px;top:350.05px;font-size:11px;font-weight:normal;color:#000;">São Paulo</div><div class=t style="left:495px;top:334.05px;font-size:11px;font-weight:normal;color:#000;">Observações</div><div class=a style="left:495px;top:347px;width:65px;height:51px;background:#fff;border:1px solid #7f7f7f;box-sizing:border-box;"></div><div class=t style="left:250px;top:366.05px;font-size:11px;font-weight:normal;color:#000;">UF</div><div class=a style="left:250px;top:379px;width:25px;height:19px;background:#fff;border:1px solid #7f7f7f;box-sizing:border-box;"></div><div class=t style="left:252px;top:382.05px;font-size:11px;font-weight:normal;color:#000;">SP</div><div class=t style="left:281px;top:366.05px;font-size:11px;font-weight:normal;color:#000;">CEP</div><div class=a style="left:281px;top:379px;width:62px;height:19px;background:#fff;border:1px solid #7f7f7f;box-sizing:border-box;"></div><div class=t style="left:283px;top:382.05px;font-size:11px;font-weight:normal;color:#000;">4044-001</div><div class=a style="left:346px;top:378px;width:20px;height:20px;background:linear-gradient(#f2f5f8,#c8d0da);border:1px solid #3c4450;border-radius:4px;box-sizing:border-box"></div><svg style='left:346px;top:378px' width='20' height='20' viewBox='0 0 20 20'><circle cx='9' cy='9' r='4.5' fill='#dde6ef' stroke='#3e4a58' stroke-width='1.5'/><path d='M12 12 L16 16' stroke='#3e4a58' stroke-width='2.4' stroke-linecap='round'/></svg><div class=t style="left:372px;top:366.05px;font-size:11px;font-weight:normal;color:#000;">Telefone(s)</div><div class=a style='left:372px;top:379px;width:95px;height:19px;background:#fff;border:1px solid #7f7f7f;box-sizing:border-box;overflow:hidden'><div class=t style='left:1px;top:3.6px;font-size:11px'>99999-1111; 99999-2222</div></div><div class=a style="left:469px;top:378px;width:20px;height:20px;background:linear-gradient(#f2f5f8,#c8d0da);border:1px solid #3c4450;border-radius:4px;box-sizing:border-box"></div><svg style='left:469px;top:378px' width='20' height='20' viewBox='0 0 20 20'><circle cx='10' cy='10' r='6' fill='none' stroke='#3a4654' stroke-width='1.3'/><path d='M5 16 L6 13' stroke='#3a4654' stroke-width='1.3'/><path d='M7.5 8 Q8 12 12 12.5' stroke='#3a4654' stroke-width='1.5' fill='none'/></svg><div class=t style="left:737px;top:80.23px;font-size:13px;font-weight:bold;color:#111;letter-spacing:0.2px;text-shadow:1px 1px 1px rgba(0,0,0,0.35)">Textos do paciente</div><svg style='left:930.9px;top:75.9px' width='19.2' height='19.2' viewBox='-9.6 -9.6 19.2 19.2'><defs><radialGradient id='pg940.5_85.5' cx='0.4' cy='0.3' r='0.85'><stop offset='0' stop-color='#fbfcfd'/><stop offset='1' stop-color='#a3aebb'/></radialGradient></defs><circle r='8.1' fill='url(#pg940.5_85.5)' stroke='#4a525c' stroke-width='1.1'/><rect x='-4.5' y='-4.5' width='9' height='9' rx='1' fill='none' stroke='#3a4654' stroke-width='1.1'/><rect x='-2.5' y='-4.5' width='5' height='3' fill='#3a4654'/><rect x='-3' y='1' width='6' height='3' fill='none' stroke='#3a4654' stroke-width='0.8'/></svg><svg style='left:950.9px;top:75.9px' width='19.2' height='19.2' viewBox='-9.6 -9.6 19.2 19.2'><defs><radialGradient id='pg960.5_85.5' cx='0.4' cy='0.3' r='0.85'><stop offset='0' stop-color='#fbfcfd'/><stop offset='1' stop-color='#a3aebb'/></radialGradient></defs><circle r='8.1' fill='url(#pg960.5_85.5)' stroke='#4a525c' stroke-width='1.1'/><path d='M-3.5 -5 L1.5 -5 L4 -2.5 L4 5 L-3.5 5 Z' fill='#fff' stroke='#3a4654' stroke-width='1'/><path d='M1.5 -5 L1.5 -2.5 L4 -2.5' fill='none' stroke='#3a4654'/></svg><svg style='left:970.9px;top:75.9px' width='19.2' height='19.2' viewBox='-9.6 -9.6 19.2 19.2'><defs><radialGradient id='pg980.5_85.5' cx='0.4' cy='0.3' r='0.85'><stop offset='0' stop-color='#fbfcfd'/><stop offset='1' stop-color='#a3aebb'/></radialGradient></defs><circle r='8.1' fill='url(#pg980.5_85.5)' stroke='#4a525c' stroke-width='1.1'/><path d='M0 -6 L5.5 -0.5 L2.5 -0.5 L2.5 5.5 L-2.5 5.5 L-2.5 -0.5 L-5.5 -0.5 Z' fill='#6a8aac' stroke='#3d5a78' stroke-width='0.5'/></svg><svg style='left:990.9px;top:75.9px' width='19.2' height='19.2' viewBox='-9.6 -9.6 19.2 19.2'><defs><radialGradient id='pg1000.5_85.5' cx='0.4' cy='0.3' r='0.85'><stop offset='0' stop-color='#fbfcfd'/><stop offset='1' stop-color='#a3aebb'/></radialGradient></defs><circle r='8.1' fill='url(#pg1000.5_85.5)' stroke='#4a525c' stroke-width='1.1'/><circle r='4.8' fill='none' stroke='#3a4654' stroke-width='1'/><path d='M0 -3 L0 0 L2.5 1' stroke='#3a4654' fill='none'/><path d='M-5 -2 L-6 -5' stroke='#3a4654'/></svg><svg style='left:1010.9px;top:75.9px' width='19.2' height='19.2' viewBox='-9.6 -9.6 19.2 19.2'><defs><radialGradient id='pg1020.5_85.5' cx='0.4' cy='0.3' r='0.85'><stop offset='0' stop-color='#fbfcfd'/><stop offset='1' stop-color='#a3aebb'/></radialGradient></defs><circle r='8.1' fill='url(#pg1020.5_85.5)' stroke='#4a525c' stroke-width='1.1'/><path d='M-5.5 5.5 L-3 -0.5 L2 -5 L5.5 -1.5 L0.5 3 Z' fill='#4a944a' stroke='#2a5e2a' stroke-width='0.6'/><circle cx='-1' cy='1' r='1.3' fill='#e8f0e8'/><path d='M2 -5 L4 -7 L7 -4 L5.5 -1.5' fill='#3a7a3a'/></svg><div class=t style="right:22px;top:80.67px;font-size:9.2px;font-weight:normal;color:#111;letter-spacing:0.05px;">Gravado em 13/10/2022 15:19</div><svg style='left:1260.4px;top:75.4px' width='19.2' height='19.2' viewBox='-9.6 -9.6 19.2 19.2'><defs><radialGradient id='pg1270_85' cx='0.4' cy='0.3' r='0.85'><stop offset='0' stop-color='#fbfcfd'/><stop offset='1' stop-color='#a3aebb'/></radialGradient></defs><circle r='8.1' fill='url(#pg1270_85)' stroke='#4a525c' stroke-width='1.1'/><path d='M-3.8 -3.8 L3.8 3.8 M3.8 -3.8 L-3.8 3.8' stroke='#3a4654' stroke-width='1.8'/></svg><div class=t style="left:737px;top:103.05px;font-size:11px;font-weight:normal;color:#000;">Nome do texto</div><div class=a style="left:737px;top:116px;width:237px;height:19px;background:#fff;border:1px solid #7f7f7f;box-sizing:border-box;"></div><div class=t style="left:739px;top:119.05px;font-size:11px;font-weight:normal;color:#000;">Receita</div><div class=t style="left:978px;top:103.05px;font-size:11px;font-weight:normal;color:#000;">Data</div><div class=a style="left:978px;top:116px;width:72px;height:19px;background:#fff;border:1px solid #7f7f7f;box-sizing:border-box;"></div><div class=t style="left:980px;top:119.05px;font-size:11px;font-weight:normal;color:#000;">13/10/2022</div><svg style='left:1260px;top:98px' width='20' height='18'><g fill='#e8ecf0' stroke='#4a5666' stroke-width='0.9'><rect x='2.5' y='1.5' width='8' height='10'/><rect x='5.5' y='4.5' width='8' height='10'/></g><path d='M7 7.5 H12 M7 9.5 H12 M7 11.5 H12' stroke='#4a5666' stroke-width='0.7'/><path d='M15 11 V17 M12 14 H18' stroke='#4a5666' stroke-width='1.6'/></svg><div class=t style="left:737px;top:142.04px;font-size:11px;font-weight:normal;color:#000;">Texto</div><div class=a style="left:737px;top:158px;width:151px;height:19px;background:#fff;border:1px solid #7f7f7f;box-sizing:border-box;"></div><div class=t style="left:739px;top:162.04px;font-size:11px;font-weight:normal;color:#000;">Arial</div><div class=a style="left:872px;top:159px;width:15px;height:17px;background:linear-gradient(#f4f4f4,#e2e2e2);border-left:1px solid #d0d0d0;box-sizing:border-box;"></div><div class=a style="left:875.5px;top:165.5px;width:0;height:0;border-left:4px solid transparent;border-right:4px solid transparent;border-top:5px solid #000"></div><div class=a style="left:891px;top:158px;width:40px;height:19px;background:#fff;border:1px solid #7f7f7f;box-sizing:border-box;"></div><div class=t style="left:893px;top:161.59px;font-size:11.5px;font-weight:normal;color:#000;">12</div><div class=a style="left:915px;top:159px;width:15px;height:17px;background:linear-gradient(#f4f4f4,#e2e2e2);border-left:1px solid #d0d0d0;box-sizing:border-box;"></div><div class=a style="left:918.5px;top:165.5px;width:0;height:0;border-left:4px solid transparent;border-right:4px solid transparent;border-top:5px solid #000"></div><div class=a style="left:934px;top:155px;width:23px;height:23px;background:linear-gradient(#e9edf2,#c6ced8);border:1px solid #3c434c;border-radius:4px;box-sizing:border-box"></div><svg style='left:934px;top:155px' width='23' height='23' viewBox='0 0 23 23'><text x='11.5' y='16.5' text-anchor='middle' font-family='Liberation Serif' font-weight='bold' font-size='14' fill='#4a5666'>N</text></svg><div class=a style="left:959px;top:155px;width:23px;height:23px;background:linear-gradient(#e9edf2,#c6ced8);border:1px solid #3c434c;border-radius:4px;box-sizing:border-box"></div><svg style='left:959px;top:155px' width='23' height='23' viewBox='0 0 23 23'><text x='11.5' y='16.5' text-anchor='middle' font-family='Liberation Serif' font-style='italic' font-weight='bold' font-size='14' fill='#6a7480'>I</text></svg><div class=a style="left:984px;top:155px;width:23px;height:23px;background:linear-gradient(#e9edf2,#c6ced8);border:1px solid #3c434c;border-radius:4px;box-sizing:border-box"></div><svg style='left:984px;top:155px' width='23' height='23' viewBox='0 0 23 23'><text x='11.5' y='15' text-anchor='middle' font-family='Liberation Serif' font-weight='bold' font-size='13' fill='#6a7480'>S</text><rect x='6.5' y='17' width='10' height='1.2' fill='#6a7480'/></svg><div class=a style="left:1012px;top:155px;width:23px;height:23px;background:linear-gradient(#e9edf2,#c6ced8);border:1px solid #3c434c;border-radius:4px;box-sizing:border-box"></div><svg style='left:1012px;top:155px' width='23' height='23' viewBox='0 0 23 23'><text x='10' y='16' text-anchor='middle' font-family='Liberation Serif' font-weight='bold' font-size='13' fill='#6a7480'>X</text><text x='16.5' y='18' font-family='Liberation Serif' font-weight='bold' font-size='8' fill='#6a7480'>2</text></svg><div class=a style="left:1037px;top:155px;width:23px;height:23px;background:linear-gradient(#e9edf2,#c6ced8);border:1px solid #3c434c;border-radius:4px;box-sizing:border-box"></div><svg style='left:1037px;top:155px' width='23' height='23' viewBox='0 0 23 23'><text x='10' y='17' text-anchor='middle' font-family='Liberation Serif' font-weight='bold' font-size='13' fill='#6a7480'>X</text><text x='15.5' y='11' font-family='Liberation Serif' font-weight='bold' font-size='8' fill='#6a7480'>2</text></svg><div class=a style="left:1065px;top:155px;width:23px;height:23px;background:linear-gradient(#e9edf2,#c6ced8);border:1px solid #3c434c;border-radius:4px;box-sizing:border-box"></div><svg style='left:1065px;top:155px' width='23' height='23' viewBox='0 0 23 23'><path d='M8 8 L14 5 L19 13 L12 17 Z' fill='#6a7480'/><path d='M4 15 Q3 9 9 7' stroke='#6a7480' stroke-width='2' fill='none'/><path d='M10 3 V10' stroke='#6a7480' stroke-width='1.5'/></svg><div class=a style="left:1093px;top:155px;width:23px;height:23px;background:linear-gradient(#f4f6f9,#e4e9ef);border:1px solid #3c434c;border-radius:4px;box-sizing:border-box"></div><svg style='left:1093px;top:155px' width='23' height='23' viewBox='0 0 23 23'><rect x='6' y='6.0' width='9' height='1.1' fill='#4a5666'/><rect x='6' y='8.6' width='6' height='1.1' fill='#4a5666'/><rect x='6' y='11.2' width='9' height='1.1' fill='#4a5666'/><rect x='6' y='13.8' width='6' height='1.1' fill='#4a5666'/><rect x='6' y='16.4' width='9' height='1.1' fill='#4a5666'/></svg><div class=a style="left:1118px;top:155px;width:23px;height:23px;background:linear-gradient(#e9edf2,#c6ced8);border:1px solid #3c434c;border-radius:4px;box-sizing:border-box"></div><svg style='left:1118px;top:155px' width='23' height='23' viewBox='0 0 23 23'><rect x='6' y='6.0' width='11' height='1.1' fill='#4a5666'/><rect x='7' y='8.6' width='9' height='1.1' fill='#4a5666'/><rect x='6' y='11.2' width='11' height='1.1' fill='#4a5666'/><rect x='7' y='13.8' width='9' height='1.1' fill='#4a5666'/><rect x='6' y='16.4' width='11' height='1.1' fill='#4a5666'/></svg><div class=a style="left:1143px;top:155px;width:23px;height:23px;background:linear-gradient(#e9edf2,#c6ced8);border:1px solid #3c434c;border-radius:4px;box-sizing:border-box"></div><svg style='left:1143px;top:155px' width='23' height='23' viewBox='0 0 23 23'><rect x='8' y='6.0' width='9' height='1.1' fill='#4a5666'/><rect x='11' y='8.6' width='6' height='1.1' fill='#4a5666'/><rect x='8' y='11.2' width='9' height='1.1' fill='#4a5666'/><rect x='11' y='13.8' width='6' height='1.1' fill='#4a5666'/><rect x='8' y='16.4' width='9' height='1.1' fill='#4a5666'/></svg><div class=a style="left:1171px;top:155px;width:23px;height:23px;background:linear-gradient(#e9edf2,#c6ced8);border:1px solid #3c434c;border-radius:4px;box-sizing:border-box"></div><svg style='left:1171px;top:155px' width='23' height='23' viewBox='0 0 23 23'><path d='M4 11 L10 5 L10 8.5 Q17 8.5 19 15 Q16 12.5 10 12.5 L10 16 Z' fill='#4a5666'/></svg><div class=a style="left:1256px;top:155px;width:18px;height:12px;background:linear-gradient(#f4f6f9,#d0d7df);border:1px solid #3c434c;border-radius:2px;box-sizing:border-box"></div><div class=a style='left:1260px;top:158px;width:0;height:0;border-left:5px solid transparent;border-right:5px solid transparent;border-bottom:5px solid #3c4450'></div><div class=a style="left:1256px;top:169px;width:18px;height:12px;background:linear-gradient(#f4f6f9,#d0d7df);border:1px solid #3c434c;border-radius:2px;box-sizing:border-box"></div><div class=a style="left:1260px;top:175px;width:2px;height:2px;background:#222"></div><div class=a style="left:1264px;top:175px;width:2px;height:2px;background:#222"></div><div class=a style="left:1268px;top:175px;width:2px;height:2px;background:#222"></div><div class=a style="left:737px;top:182px;width:537px;height:189px;background:#fff;border:1px solid #707070;box-sizing:border-box"></div><div class=a style="left:1257px;top:183px;width:16px;height:187px;background:#f0f0f0"></div><div class=a style="left:1257px;top:200px;width:16px;height:139px;background:#c8c8c8"></div><svg style='left:1259px;top:185px' width='12' height='12'><path d='M2 8 L6 4 L10 8' stroke='#555' stroke-width='1.6' fill='none'/></svg><svg style='left:1259px;top:355px' width='12' height='12'><path d='M2 4 L6 8 L10 4' stroke='#555' stroke-width='1.6' fill='none'/></svg><div class=t style="left:795.0px;width:400px;text-align:center;top:189.19px;font-size:23px;font-weight:normal;color:#000;">Receita</div><div class=t style="left:1080px;top:304.55px;font-size:11px;font-weight:normal;color:#000;">Farmácia</div><div class=t style="left:1080px;top:348.55px;font-size:11px;font-weight:normal;color:#000;">Farmácia</div><div class=a style="left:737px;top:377px;width:537px;height:1px;background:#8a9098"></div><div class=a style="left:1095px;top:384px;width:86px;height:20px;background:linear-gradient(#bcc8d6,#aab8c8);border:1px solid #2e3440;border-radius:4px;box-sizing:border-box;box-shadow:inset 1px 1px 0 #dfe6ee"></div><div class=t style="left:938.0px;width:400px;text-align:center;top:387.19px;font-size:12.5px;font-weight:normal;color:#000;">Biblioteca</div><div class=a style="left:1188px;top:384px;width:86px;height:20px;background:linear-gradient(#bcc8d6,#aab8c8);border:1px solid #2e3440;border-radius:4px;box-sizing:border-box;box-shadow:inset 1px 1px 0 #dfe6ee"></div><div class=t style="left:1031.0px;width:400px;text-align:center;top:387.19px;font-size:12.5px;font-weight:normal;color:#000;">Imprimir</div><div class=t style="left:186px;top:415.24px;font-size:13px;font-weight:bold;color:#111;letter-spacing:0.3px;text-shadow:1px 1px 1px rgba(0,0,0,0.35)">Anamneses</div><svg style='left:380.4px;top:410.4px' width='19.2' height='19.2' viewBox='-9.6 -9.6 19.2 19.2'><defs><radialGradient id='pg390_420' cx='0.4' cy='0.3' r='0.85'><stop offset='0' stop-color='#fbfcfd'/><stop offset='1' stop-color='#a3aebb'/></radialGradient></defs><circle r='8.1' fill='url(#pg390_420)' stroke='#4a525c' stroke-width='1.1'/><rect x='-4.5' y='-4.5' width='9' height='9' rx='1' fill='none' stroke='#3a4654' stroke-width='1.1'/><rect x='-2.5' y='-4.5' width='5' height='3' fill='#3a4654'/><rect x='-3' y='1' width='6' height='3' fill='none' stroke='#3a4654' stroke-width='0.8'/></svg><svg style='left:400.4px;top:410.4px' width='19.2' height='19.2' viewBox='-9.6 -9.6 19.2 19.2'><defs><radialGradient id='pg410_420' cx='0.4' cy='0.3' r='0.85'><stop offset='0' stop-color='#fbfcfd'/><stop offset='1' stop-color='#a3aebb'/></radialGradient></defs><circle r='8.1' fill='url(#pg410_420)' stroke='#4a525c' stroke-width='1.1'/><path d='M-3.5 -5 L1.5 -5 L4 -2.5 L4 5 L-3.5 5 Z' fill='#fff' stroke='#3a4654' stroke-width='1'/><path d='M1.5 -5 L1.5 -2.5 L4 -2.5' fill='none' stroke='#3a4654'/></svg><svg style='left:420.4px;top:410.4px' width='19.2' height='19.2' viewBox='-9.6 -9.6 19.2 19.2'><defs><radialGradient id='pg430_420' cx='0.4' cy='0.3' r='0.85'><stop offset='0' stop-color='#fbfcfd'/><stop offset='1' stop-color='#a3aebb'/></radialGradient></defs><circle r='8.1' fill='url(#pg430_420)' stroke='#4a525c' stroke-width='1.1'/><circle r='4.8' fill='none' stroke='#3a4654' stroke-width='1'/><path d='M0 -3 L0 0 L2.5 1' stroke='#3a4654' fill='none'/><path d='M-5 -2 L-6 -5' stroke='#3a4654'/></svg><svg style='left:440.4px;top:410.4px' width='19.2' height='19.2' viewBox='-9.6 -9.6 19.2 19.2'><defs><radialGradient id='pg450_420' cx='0.4' cy='0.3' r='0.85'><stop offset='0' stop-color='#fbfcfd'/><stop offset='1' stop-color='#a3aebb'/></radialGradient></defs><circle r='8.1' fill='url(#pg450_420)' stroke='#4a525c' stroke-width='1.1'/><path d='M-5.5 5.5 L-3 -0.5 L2 -5 L5.5 -1.5 L0.5 3 Z' fill='#4a944a' stroke='#2a5e2a' stroke-width='0.6'/><circle cx='-1' cy='1' r='1.3' fill='#e8f0e8'/><path d='M2 -5 L4 -7 L7 -4 L5.5 -1.5' fill='#3a7a3a'/></svg><div class=t style="left:186px;top:438.05px;font-size:11px;font-weight:normal;color:#000;">Data</div><div class=a style="left:186px;top:451px;width:80px;height:19px;background:#fff;border:1px solid #7f7f7f;box-sizing:border-box;"></div><div class=t style="left:188px;top:454.05px;font-size:11px;font-weight:normal;color:#000;">13/10/2022</div><div class=t style="left:186px;top:476.05px;font-size:11px;font-weight:normal;color:#000;">Diagnósticos</div><div class=a style="left:186px;top:489px;width:177px;height:19px;background:#fff;border:1px solid #7f7f7f;box-sizing:border-box;"></div><div class=t style="left:188px;top:492.05px;font-size:11px;font-weight:normal;color:#000;">Arritmia ventricular por reentrada</div><div class=a style="left:365px;top:488px;width:20px;height:20px;background:linear-gradient(#f2f5f8,#c8d0da);border:1px solid #3c4450;border-radius:4px;box-sizing:border-box"></div><svg style='left:365px;top:488px' width='20' height='20' viewBox='0 0 20 20'><circle cx='9' cy='9' r='4.5' fill='#dde6ef' stroke='#3e4a58' stroke-width='1.5'/><path d='M12 12 L16 16' stroke='#3e4a58' stroke-width='2.4' stroke-linecap='round'/></svg><div class=a style="left:388px;top:489px;width:56px;height:19px;background:#fff;border:1px solid #7f7f7f;box-sizing:border-box;"></div><div class=t style="left:390px;top:492.05px;font-size:11px;font-weight:normal;color:#000;">I47.0</div><div class=a style="left:446px;top:488px;width:20px;height:20px;background:linear-gradient(#f2f5f8,#c8d0da);border:1px solid #3c4450;border-radius:4px;box-sizing:border-box"></div><svg style='left:446px;top:488px' width='20' height='20' viewBox='0 0 20 20'><circle cx='9' cy='9' r='4.5' fill='#dde6ef' stroke='#3e4a58' stroke-width='1.5'/><path d='M12 12 L16 16' stroke='#3e4a58' stroke-width='2.4' stroke-linecap='round'/></svg><div class=a style="left:186px;top:512px;width:177px;height:19px;background:#fff;border:1px solid #7f7f7f;box-sizing:border-box;"></div><div class=a style="left:365px;top:511px;width:20px;height:20px;background:linear-gradient(#f2f5f8,#c8d0da);border:1px solid #3c4450;border-radius:4px;box-sizing:border-box"></div><svg style='left:365px;top:511px' width='20' height='20' viewBox='0 0 20 20'><circle cx='9' cy='9' r='4.5' fill='#dde6ef' stroke='#3e4a58' stroke-width='1.5'/><path d='M12 12 L16 16' stroke='#3e4a58' stroke-width='2.4' stroke-linecap='round'/></svg><div class=a style="left:388px;top:512px;width:56px;height:19px;background:#fff;border:1px solid #7f7f7f;box-sizing:border-box;"></div><div class=a style="left:446px;top:511px;width:20px;height:20px;background:linear-gradient(#f2f5f8,#c8d0da);border:1px solid #3c4450;border-radius:4px;box-sizing:border-box"></div><svg style='left:446px;top:511px' width='20' height='20' viewBox='0 0 20 20'><circle cx='9' cy='9' r='4.5' fill='#dde6ef' stroke='#3e4a58' stroke-width='1.5'/><path d='M12 12 L16 16' stroke='#3e4a58' stroke-width='2.4' stroke-linecap='round'/></svg><div class=t style="left:472px;top:437.55px;font-size:11px;font-weight:normal;color:#000;">Palavras-chave</div><div class=a style="left:472px;top:452px;width:88px;height:79px;background:#fff;border:1px solid #7f7f7f;box-sizing:border-box;"></div><div class=t style="left:475.5px;top:455.05px;font-size:11px;font-weight:normal;color:#000;">Etilista</div><div class=t style="left:475.5px;top:467.55px;font-size:11px;font-weight:normal;color:#000;">Ex-tabagista</div><div class=t style="left:475.5px;top:480.05px;font-size:11px;font-weight:normal;color:#000;">Hipertenso</div><div class=t style="left:186px;top:539.04px;font-size:11px;font-weight:normal;color:#000;">Texto da anamnese</div><div class=a style="left:186px;top:555px;width:152px;height:19px;background:#fff;border:1px solid #7f7f7f;box-sizing:border-box;"></div><div class=t style="left:188px;top:559.04px;font-size:11px;font-weight:normal;color:#000;">Arial</div><div class=a style="left:322px;top:556px;width:15px;height:17px;background:linear-gradient(#f4f4f4,#e2e2e2);border-left:1px solid #d0d0d0;box-sizing:border-box;"></div><div class=a style="left:325.5px;top:562.5px;width:0;height:0;border-left:4px solid transparent;border-right:4px solid transparent;border-top:5px solid #000"></div><div class=a style="left:341px;top:555px;width:40px;height:19px;background:#fff;border:1px solid #7f7f7f;box-sizing:border-box;"></div><div class=t style="left:343px;top:558.59px;font-size:11.5px;font-weight:normal;color:#000;">12</div><div class=a style="left:365px;top:556px;width:15px;height:17px;background:linear-gradient(#f4f4f4,#e2e2e2);border-left:1px solid #d0d0d0;box-sizing:border-box;"></div><div class=a style="left:368.5px;top:562.5px;width:0;height:0;border-left:4px solid transparent;border-right:4px solid transparent;border-top:5px solid #000"></div><div class=a style="left:384px;top:553px;width:23px;height:23px;background:linear-gradient(#e9edf2,#c6ced8);border:1px solid #3c434c;border-radius:4px;box-sizing:border-box"></div><svg style='left:384px;top:553px' width='23' height='23' viewBox='0 0 23 23'><text x='11.5' y='16.5' text-anchor='middle' font-family='Liberation Serif' font-weight='bold' font-size='14' fill='#4a5666'>N</text></svg><div class=a style="left:409px;top:553px;width:23px;height:23px;background:linear-gradient(#e9edf2,#c6ced8);border:1px solid #3c434c;border-radius:4px;box-sizing:border-box"></div><svg style='left:409px;top:553px' width='23' height='23' viewBox='0 0 23 23'><text x='11.5' y='16.5' text-anchor='middle' font-family='Liberation Serif' font-style='italic' font-weight='bold' font-size='14' fill='#6a7480'>I</text></svg><div class=a style="left:434px;top:553px;width:23px;height:23px;background:linear-gradient(#e9edf2,#c6ced8);border:1px solid #3c434c;border-radius:4px;box-sizing:border-box"></div><svg style='left:434px;top:553px' width='23' height='23' viewBox='0 0 23 23'><text x='11.5' y='15' text-anchor='middle' font-family='Liberation Serif' font-weight='bold' font-size='13' fill='#6a7480'>S</text><rect x='6.5' y='17' width='10' height='1.2' fill='#6a7480'/></svg><div class=a style="left:462px;top:553px;width:23px;height:23px;background:linear-gradient(#e9edf2,#c6ced8);border:1px solid #3c434c;border-radius:4px;box-sizing:border-box"></div><svg style='left:462px;top:553px' width='23' height='23' viewBox='0 0 23 23'><text x='10' y='16' text-anchor='middle' font-family='Liberation Serif' font-weight='bold' font-size='13' fill='#6a7480'>X</text><text x='16.5' y='18' font-family='Liberation Serif' font-weight='bold' font-size='8' fill='#6a7480'>2</text></svg><div class=a style="left:487px;top:553px;width:23px;height:23px;background:linear-gradient(#e9edf2,#c6ced8);border:1px solid #3c434c;border-radius:4px;box-sizing:border-box"></div><svg style='left:487px;top:553px' width='23' height='23' viewBox='0 0 23 23'><text x='10' y='17' text-anchor='middle' font-family='Liberation Serif' font-weight='bold' font-size='13' fill='#6a7480'>X</text><text x='15.5' y='11' font-family='Liberation Serif' font-weight='bold' font-size='8' fill='#6a7480'>2</text></svg><div class=a style="left:515px;top:553px;width:23px;height:23px;background:linear-gradient(#e9edf2,#c6ced8);border:1px solid #3c434c;border-radius:4px;box-sizing:border-box"></div><svg style='left:515px;top:553px' width='23' height='23' viewBox='0 0 23 23'><path d='M8 8 L14 5 L19 13 L12 17 Z' fill='#6a7480'/><path d='M4 15 Q3 9 9 7' stroke='#6a7480' stroke-width='2' fill='none'/><path d='M10 3 V10' stroke='#6a7480' stroke-width='1.5'/></svg><div class=a style="left:186px;top:579px;width:539px;height:126px;background:#fff;border:1px solid #707070;box-sizing:border-box"></div><div class=a style="left:705px;top:580px;width:18px;height:124px;background:#fff"></div><svg style='left:708px;top:688px' width='12' height='12'><path d='M2 4 L6 8 L10 4' stroke='#555' stroke-width='1.6' fill='none'/></svg><div class=t style="left:190.5px;top:583.84px;font-size:12px;font-weight:normal;color:#000;letter-spacing:0.1px;">QUEIXA PRINCIPAL: Palpitações cardíacas</div><div class=t style="left:190.5px;top:604.64px;font-size:12px;font-weight:normal;color:#000;letter-spacing:0.1px;">HMA: Paciente relata palpitações esporádicas, cansaço, tontura e falta de ar com</div><div class=t style="left:190.5px;top:618.84px;font-size:12px;font-weight:normal;color:#000;letter-spacing:0.1px;">início há aprox. 2 semanas. Nega pontadas no peito, formigamento nos braços e</div><div class=t style="left:190.5px;top:632.84px;font-size:12px;font-weight:normal;color:#000;letter-spacing:0.1px;">dispneia.</div><div class=t style="left:190.5px;top:662.64px;font-size:12px;font-weight:normal;color:#000;letter-spacing:0.1px;">ANTECEDENTES: Hipertenso sabidamente desde 2018. Uso regular de losartana.</div><div class=t style="left:190.5px;top:676.64px;font-size:12px;font-weight:normal;color:#000;letter-spacing:0.1px;">Etilista Social. ex-Tabagista (até 2009).</div><div class=a style="left:186px;top:711px;width:538px;height:1px;background:#8a9098"></div><div class=a style="left:338px;top:718px;width:98px;height:20px;background:linear-gradient(#bcc8d6,#aab8c8);border:1px solid #2e3440;border-radius:4px;box-sizing:border-box;box-shadow:inset 1px 1px 0 #dfe6ee"></div><div class=t style="left:187.0px;width:400px;text-align:center;top:721.01px;font-size:12.7px;font-weight:normal;color:#000;">Histórico</div><div class=a style="left:442px;top:718px;width:86px;height:20px;background:linear-gradient(#bcc8d6,#aab8c8);border:1px solid #2e3440;border-radius:4px;box-sizing:border-box;box-shadow:inset 1px 1px 0 #dfe6ee"></div><div class=t style="left:285.0px;width:400px;text-align:center;top:721.01px;font-size:12.7px;font-weight:normal;color:#000;">Biblioteca</div><div class=a style="left:534px;top:718px;width:98px;height:20px;background:linear-gradient(#bcc8d6,#aab8c8);border:1px solid #2e3440;border-radius:4px;box-sizing:border-box;box-shadow:inset 1px 1px 0 #dfe6ee"></div><div class=t style="left:383.0px;width:400px;text-align:center;top:721.01px;font-size:12.7px;font-weight:normal;color:#000;">Inserir data</div><div class=a style="left:638px;top:718px;width:86px;height:20px;background:linear-gradient(#bcc8d6,#aab8c8);border:1px solid #2e3440;border-radius:4px;box-sizing:border-box;box-shadow:inset 1px 1px 0 #dfe6ee"></div><div class=t style="left:481.0px;width:400px;text-align:center;top:721.01px;font-size:12.7px;font-weight:normal;color:#000;">Imprimir</div><svg style='left:1260.4px;top:410.4px' width='19.2' height='19.2' viewBox='-9.6 -9.6 19.2 19.2'><defs><radialGradient id='pg1270_420' cx='0.4' cy='0.3' r='0.85'><stop offset='0' stop-color='#fbfcfd'/><stop offset='1' stop-color='#a3aebb'/></radialGradient></defs><circle r='8.1' fill='url(#pg1270_420)' stroke='#4a525c' stroke-width='1.1'/><path d='M-3.8 -3.8 L3.8 3.8 M3.8 -3.8 L-3.8 3.8' stroke='#3a4654' stroke-width='1.8'/></svg><div class=a style="left:737px;top:437px;width:537px;height:301px;background:#fff;border:1px solid #6a6a6a;box-sizing:border-box"></div><div class=a style="left:738px;top:438px;width:535px;height:17px;background:#dfe5ee"></div><div class=a style="left:738px;top:455px;width:535px;height:1px;background:#111"></div><div class=a style="left:738px;top:456px;width:535px;height:15px;background:#3399ff"></div><div class=a style="left:738px;top:488px;width:535px;height:1px;background:#b8b8b8"></div><svg style='left:187px;top:749px' width='13' height='15'><path d='M0.5 0.5 L9 0.5 L12.5 4 L12.5 14.5 L0.5 14.5 Z' fill='#f4f8d8' stroke='#c8ccb0' stroke-width='1'/><path d='M3.5 6 Q4 3 8 3.5 L7.5 2 L10 4.5 L7 6 L7.5 4.8 Q5 4.5 4.8 6.5 Z' fill='#28a028'/><path d='M9.5 9 Q9 12 5 11.5 L5.5 13 L3 10.5 L6 9 L5.5 10.2 Q8 10.5 8.2 8.5 Z' fill='#28a028'/></svg><div class=a style="left:538px;top:207px;width:585px;height:474px;background:#dfe5ef;border:1px solid #1f7ad6;box-sizing:border-box;box-shadow:1px 2px 9px 1px rgba(0,0,0,0.22)"></div><div class=a style="left:538px;top:207px;width:585px;height:31px;background:#0078d7"></div><svg style='left:549px;top:217px' width='12' height='13'><rect x='0.5' y='2.5' width='11' height='9' rx='1.5' fill='#a8a8a8' stroke='#6c6c6c'/><rect x='2' y='1' width='4' height='2' fill='#8a8a8a'/><circle cx='6.5' cy='7' r='2.6' fill='#5d6c7c' stroke='#d8d8d8' stroke-width='0.8'/></svg><div class=t style="left:569px;top:216.64px;font-size:12px;font-weight:bold;color:#fff;">Imagem</div><div class=a style="left:1003px;top:222px;width:10px;height:1px;background:#fff"></div><div class=a style="left:1048px;top:217px;width:10px;height:10px;border:1px solid #fff;box-sizing:border-box"></div><svg style='left:1094px;top:217px' width='11' height='11'><path d='M0.5 0.5 L10.5 10.5 M10.5 0.5 L0.5 10.5' stroke='#fff' stroke-width='1.1'/></svg><div class=t style="left:553px;top:247.59px;font-size:11.5px;font-weight:normal;color:#000;">Data:</div><div class=a style="left:581px;top:244px;width:81px;height:18px;background:#fff;border:1px solid #7f7f7f;box-sizing:border-box;"></div><div class=t style="left:583px;top:247.14px;font-size:12px;font-weight:normal;color:#000;">13/10/2022</div><div class=a style="left:646px;top:245px;width:15px;height:16px;background:linear-gradient(#f4f4f4,#e2e2e2);border-left:1px solid #d0d0d0;box-sizing:border-box;"></div><div class=a style="left:649.5px;top:251.0px;width:0;height:0;border-left:4px solid transparent;border-right:4px solid transparent;border-top:5px solid #000"></div><div class=t style="left:672.5px;top:248.32px;font-size:10.7px;font-weight:normal;color:#000;">Descrição:</div><div class=a style="left:724px;top:244px;width:347px;height:18px;background:#fff;border:1px solid #7f7f7f;box-sizing:border-box;"></div><div class=t style="left:726px;top:247.54px;font-size:11px;font-weight:normal;color:#000;">Ecocardiografia - corte apical de 4 câmaras</div><div class=a style="left:1080px;top:245px;width:38px;height:18px;background:#b4c1d1;border-top:1px solid #dde3ea;border-left:1px solid #dde3ea;border-right:2px solid #8e9aaa;border-bottom:2px solid #8e9aaa;box-sizing:border-box"></div><div class=t style="left:1087px;top:247.09px;font-size:11.5px;font-weight:normal;color:#000;">Atlas</div><div class=a style="left:539px;top:269px;width:583px;height:1px;background:#7f9db9"></div><div class=a style="left:539px;top:270px;width:582px;height:350px;background:#fff"></div><div class=a style="left:539px;top:620px;width:582px;height:1px;background:#7f9db9"></div><div class=a style="left:539px;top:621px;width:582px;height:27px;background:#b4c2d2"></div><div class=a style="left:539px;top:648px;width:582px;height:1px;background:#808a94"></div><div class=a style="left:876px;top:652px;width:79px;height:25px;background:#b4c1d1;border-top:1px solid #e4e9ef;border-left:1px solid #e4e9ef;border-right:2px solid #8d99a8;border-bottom:2px solid #8d99a8;box-sizing:border-box"></div><div class=t style="left:715.5px;width:400px;text-align:center;top:657.87px;font-size:12.3px;font-weight:normal;color:#000;">Padrão</div><div class=a style="left:959px;top:652px;width:79px;height:25px;background:#b4c1d1;border-top:1px solid #e4e9ef;border-left:1px solid #e4e9ef;border-right:2px solid #8d99a8;border-bottom:2px solid #8d99a8;box-sizing:border-box"></div><div class=t style="left:798.5px;width:400px;text-align:center;top:657.87px;font-size:12.3px;font-weight:normal;color:#000;">Cancelar</div><div class=a style="left:1041px;top:652px;width:79px;height:25px;background:#b4c1d1;border-top:1px solid #e4e9ef;border-left:1px solid #e4e9ef;border-right:2px solid #8d99a8;border-bottom:2px solid #8d99a8;box-sizing:border-box"></div><div class=t style="left:880.5px;width:400px;text-align:center;top:657.87px;font-size:12.3px;font-weight:normal;color:#000;">OK</div><svg style='left:548px;top:281px' width='565' height='326' viewBox='548 281 565 326'><defs>
<filter id='b3' x='-50%' y='-50%' width='200%' height='200%'><feGaussianBlur stdDeviation='2.5'/></filter>
<filter id='b1' x='-50%' y='-50%' width='200%' height='200%'><feGaussianBlur stdDeviation='1'/></filter><filter id='b10' x='-50%' y='-50%' width='200%' height='200%'><feGaussianBlur stdDeviation='9'/></filter>
<filter id='echo' x='548' y='281' width='565' height='326' filterUnits='userSpaceOnUse'>
<feGaussianBlur in='SourceGraphic' stdDeviation='3.5' result='bl'/>
<feTurbulence type='fractalNoise' baseFrequency='0.045 0.3' numOctaves='3' seed='11' result='n'/>
<feColorMatrix in='n' type='matrix' values='0 0 0 0 0  0 0 0 0 0  0 0 0 0 0  2.6 0 0 0 -0.85' result='na'/>
<feComposite in='bl' in2='na' operator='in'/>
</filter>
<filter id='cf' x='548' y='281' width='565' height='326' filterUnits='userSpaceOnUse'>
<feTurbulence type='fractalNoise' baseFrequency='0.08 0.12' numOctaves='2' seed='3' result='t'/>
<feDisplacementMap in='SourceGraphic' in2='t' scale='9' xChannelSelector='R' yChannelSelector='G' result='d'/>
<feGaussianBlur in='d' stdDeviation='0.8'/>
</filter>
<clipPath id='uc'><rect x='548' y='281' width='565' height='326'/></clipPath>
</defs>
<rect x='548' y='281' width='565' height='326' fill='#000'/>
<g clip-path='url(#uc)'>
<g filter='url(#echo)'>
<path d='M618 400 L634 395 L650 450 L660 520 L640 525 L628 470 Z' fill='#8290d0' opacity='0.6'/>
<path d='M660 356 L676 352 L700 382 L714 420 L722 465 L722 525 L704 528 L696 470 L680 414 L664 385 Z' fill='#d8e0ff'/>
<path d='M626 515 L660 525 L705 538 L760 530 L812 510 L815 528 L770 548 L705 556 L650 548 L626 535 Z' fill='#dce4ff'/>
<path d='M700 548 L812 535 L805 585 L705 585 Z' fill='#8c9ad8' opacity='0.6'/>
<path d='M776 418 L792 412 L812 470 L814 512 L798 515 L782 470 Z' fill='#8290d0' opacity='0.6'/>
<path d='M862 356 L880 350 L905 400 L928 470 L930 505 L910 508 L895 460 L874 400 Z' fill='#dce4ff'/>
<path d='M824 418 L842 412 L860 480 L858 527 L838 527 L828 470 Z' fill='#8290d0' opacity='0.6'/>
<path d='M826 516 L870 522 L916 528 L960 520 L1004 510 L1006 540 L960 550 L916 552 L870 548 L828 540 Z' fill='#dce4ff'/>
<path d='M828 545 L950 545 L945 583 L835 583 Z' fill='#8c9ad8' opacity='0.6'/>
<path d='M966 418 L986 410 L1004 440 L1004 492 L985 492 L972 460 Z' fill='#98a6e4' opacity='0.8'/>
<path d='M768 354 L795 362 L797 384 L772 382 Z' fill='#6070b0' opacity='0.45'/>
<path d='M968 354 L1000 366 L1003 400 L975 405 Z' fill='#6070b0' opacity='0.45'/>
</g>
<!-- color flow -->
<g filter='url(#cf)'>
<path d='M733 342 L745 350 L756 372 L765 400 L772 430 L778 470 L778 500 L770 520 L760 545 L722 545 L718 500 L714 470 L704 440 L699 400 L705 380 L715 367 Z' fill='#e81400'/>
<path d='M740 363 L752 372 L760 398 L768 429 L777 476 L775 501 L745 503 L720 498 L716 476 L712 440 L702 400 L712 380 Z' fill='#ffdc00'/>
<path d='M722 508 L772 508 L771 514 L722 514 Z' fill='#ff9000' opacity='0.85'/>
<path d='M722 522 L766 522 L765 527 L722 527 Z' fill='#ff9000' opacity='0.75'/>
<path d='M724 535 L762 535 L761 539 L724 539 Z' fill='#ff8000' opacity='0.6'/>
<path d='M727 401 L740 404 L746 425 L746 439 L771 439 L773 451 L746 453 L740 467 L722 467 L715 440 L716 415 Z' fill='#50d4ea'/>
<path d='M763 414 L777 418 L778 448 L766 448 Z' fill='#1028d0'/>
<path d='M700 392 L708 390 L710 420 L702 425 Z' fill='#1030c0' opacity='0.85'/>
<path d='M712 334 L724 333 L725 341 L714 343 Z' fill='#1028d0'/>
<path d='M684 470 L692 470 L692 514 L685 512 Z' fill='#b01000' opacity='0.8'/>
</g>
<g fill='#000' opacity='0.8'>
<rect x='703' y='430' width='4' height='3'/><rect x='709' y='448' width='3' height='4'/><rect x='706' y='462' width='5' height='3'/><rect x='712' y='474' width='3' height='3'/><rect x='701' y='412' width='3' height='3'/>
</g>
<g fill='#1030d0'>
<rect x='705' y='438' width='2' height='3'/><rect x='711' y='456' width='2' height='2'/><rect x='703' y='455' width='2' height='2'/>
</g>
<!-- sector -->
<path d='M710 332 Q724 327 737.5 328 L817 503 M675.3 543.5 L710 332 M675.3 543.5 L739.7 546.8 Q780 540 817 529' fill='none' stroke='#e0e0e0' stroke-width='1'/>
<circle cx='710' cy='332' r='1.3' fill='#fff'/><circle cx='737.5' cy='328' r='1.3' fill='#fff'/>
<g fill='#e6e6e6'>
<rect x='617' y='285.0' width='7' height='1.8'/><rect x='618' y='304.4' width='5' height='1.8'/><rect x='618' y='323.8' width='5' height='1.8'/><rect x='618' y='343.0' width='5' height='1.8'/><rect x='618' y='362.2' width='5' height='1.8'/><rect x='617' y='381.1' width='7' height='1.8'/><rect x='618' y='399.8' width='5' height='1.8'/><rect x='618' y='418.3' width='5' height='1.8'/><rect x='618' y='455.7' width='5' height='1.8'/><rect x='617' y='474.0' width='7' height='1.8'/><rect x='618' y='492.5' width='5' height='1.8'/><rect x='618' y='510.8' width='5' height='1.8'/><rect x='618' y='529.1' width='5' height='1.8'/><rect x='618' y='546.7' width='5' height='1.8'/><rect x='617' y='564.8' width='7' height='1.8'/><rect x='618' y='582.4' width='5' height='1.8'/><path d='M621 434.5 L628 438 L621 441.5 Z'/>
</g>
<g font-family="'Liberation Sans',sans-serif" font-size='8.5' fill='#e6e6e6' font-weight='bold'>
<text x='626' y='294.5'>0</text><text x='627' y='385'>5</text><text x='630' y='478'>10</text><text x='631' y='569'>15</text>
</g>
<defs><linearGradient id='cg' x1='0' y1='0' x2='0' y2='1'>
<stop offset='0' stop-color='#ffff20'/><stop offset='0.18' stop-color='#ffc800'/><stop offset='0.3' stop-color='#f02000'/><stop offset='0.42' stop-color='#300000'/><stop offset='0.55' stop-color='#000040'/><stop offset='0.68' stop-color='#1020f0'/><stop offset='0.8' stop-color='#30a0f0'/><stop offset='0.88' stop-color='#40f0f0'/><stop offset='1' stop-color='#40f0f0'/></linearGradient>
<linearGradient id='gg' x1='0' y1='0' x2='0' y2='1'><stop offset='0' stop-color='#f8f8ff'/><stop offset='0.6' stop-color='#9090b0'/><stop offset='1' stop-color='#181830'/></linearGradient></defs>
<rect x='1019' y='295' width='11' height='106' fill='url(#cg)'/>
<rect x='1033' y='295' width='10' height='81' fill='url(#gg)'/>
<g font-family="'Liberation Sans',sans-serif" font-size='8.3' fill='#e8ecff'>
<text x='1019' y='294.3'>69.4</text><text x='1015' y='409.7'>-69.4</text>
<text x='1045.5' y='294.3' fill='#2030c0'>[B]</text>
<text x='1045.0' y='304.2'>FPS:</text><text x='1070.0' y='304.2'>22</text><text x='1044.7' y='313.6'>GN:</text><text x='1069.7' y='313.6'>130</text><text x='1044.3' y='323.1'>PWR:</text><text x='1069.3' y='323.1'>100 %</text><text x='1044.0' y='332.6'>FRQ:</text><text x='1069.0' y='332.6'>H3.6M</text><text x='1043.6' y='342.0'>DN:</text><text x='1068.6' y='342.0'>109</text><text x='1043.2' y='351.4'>D:</text><text x='1068.2' y='351.4'>16.8 cm</text><text x='1042.9' y='360.9'>THI:</text><text x='1067.9' y='360.9'>On</text><text x='1042.5' y='370.3'>X-con:</text><text x='1067.5' y='370.3'>Enh</text><text x='1042.2' y='379.8' fill='#2030c0'>[CF]</text><text x='1041.8' y='389.2'>FRQ:</text><text x='1066.8' y='389.2'>1.5M</text><text x='1041.5' y='398.7'>PRF:</text><text x='1066.5' y='398.7'>4000Hz</text><text x='1041.2' y='408.1'>WF:</text><text x='1066.2' y='408.1'>1</text><text x='1040.8' y='417.6'>GN:</text><text x='1065.8' y='417.6'>200</text><text x='1040.5' y='427.0'>Q-beam:On</text><text x='1040.1' y='436.5'>Q-flow:On</text></g>
<rect x='712' y='599' width='189' height='6.5' fill='#5a6a9c'/>
<rect x='901' y='598' width='3' height='9' fill='#f0d020'/>
<text x='912' y='604.7' font-family="'Liberation Sans',sans-serif" font-size='9' font-weight='bold' fill='#e8ecff'>16/16</text>
<text x='697' y='606' font-family="'Liberation Sans',sans-serif" font-size='10' fill='#dfe6ff'>❄</text>
<rect x='1031.5' y='556.5' width='37' height='35' fill='none' stroke='#5a6890' stroke-width='1'/>
<path d='M1032 591 Q1052 584 1068 566' fill='none' stroke='#5a6890' stroke-width='1'/>
</g></svg><svg style='left:541.5px;top:623px' width='18' height='18' viewBox='-9 -9 18 18'><defs><radialGradient id='rg550.5_632' cx='0.4' cy='0.3' r='0.8'><stop offset='0' stop-color='#e8ecf2'/><stop offset='1' stop-color='#9aa6b4'/></radialGradient></defs><circle r='7.7' fill='url(#rg550.5_632)' stroke='#5f6a76' stroke-width='1'/><rect x='-3' y='-2' width='6' height='6' fill='#fff' stroke='#333' stroke-width='1.2'/><circle cx='-3.5' cy='-3.5' r='2' fill='#ffd820'/></svg><svg style='left:560.5px;top:623px' width='18' height='18' viewBox='-9 -9 18 18'><defs><radialGradient id='rg569.5_632' cx='0.4' cy='0.3' r='0.8'><stop offset='0' stop-color='#e8ecf2'/><stop offset='1' stop-color='#9aa6b4'/></radialGradient></defs><circle r='7.7' fill='url(#rg569.5_632)' stroke='#5f6a76' stroke-width='1'/><rect x='-4' y='-4' width='6' height='6' fill='#fff' stroke='#333' stroke-width='1.2'/><path d='M0 1 L4 5 M4 1 L0 5' stroke='#d01010' stroke-width='1.5'/></svg><svg style='left:582.5px;top:623px' width='18' height='18' viewBox='-9 -9 18 18'><defs><radialGradient id='rg591.5_632' cx='0.4' cy='0.3' r='0.8'><stop offset='0' stop-color='#f4f4f4'/><stop offset='1' stop-color='#c9cdd3'/></radialGradient></defs><circle r='7.7' fill='url(#rg591.5_632)' stroke='#b8bcc2' stroke-width='1'/><rect x='-4' y='-4' width='5' height='5' fill='none' stroke='#bbb'/><rect x='-2' y='-2' width='5' height='5' fill='#fafafa' stroke='#bbb'/></svg><svg style='left:601.5px;top:623px' width='18' height='18' viewBox='-9 -9 18 18'><defs><radialGradient id='rg610.5_632' cx='0.4' cy='0.3' r='0.8'><stop offset='0' stop-color='#f4f4f4'/><stop offset='1' stop-color='#c9cdd3'/></radialGradient></defs><circle r='7.7' fill='url(#rg610.5_632)' stroke='#b8bcc2' stroke-width='1'/><rect x='-3' y='-3' width='5' height='5' fill='none' stroke='#bbb'/><rect x='-1' y='-1' width='5' height='5' fill='#fafafa' stroke='#bbb'/></svg><svg style='left:623px;top:623px' width='18' height='18' viewBox='-9 -9 18 18'><defs><radialGradient id='rg632_632' cx='0.4' cy='0.3' r='0.8'><stop offset='0' stop-color='#f4f4f4'/><stop offset='1' stop-color='#c9cdd3'/></radialGradient></defs><circle r='7.7' fill='url(#rg632_632)' stroke='#b8bcc2' stroke-width='1'/><path d='M-1 -3 L-5 0 L-1 3 Z M3 -3 L-1 0 L3 3 Z' fill='#aaa'/></svg><svg style='left:642px;top:623px' width='18' height='18' viewBox='-9 -9 18 18'><defs><radialGradient id='rg651_632' cx='0.4' cy='0.3' r='0.8'><stop offset='0' stop-color='#f4f4f4'/><stop offset='1' stop-color='#c9cdd3'/></radialGradient></defs><circle r='7.7' fill='url(#rg651_632)' stroke='#b8bcc2' stroke-width='1'/><path d='M1 -3 L5 0 L1 3 Z M-3 -3 L1 0 L-3 3 Z' fill='#aaa'/></svg><div class=t style="left:668px;top:625.64px;font-size:12px;font-weight:bold;color:#111;">1/1</div><svg style='left:701.5px;top:623px' width='18' height='18' viewBox='-9 -9 18 18'><defs><radialGradient id='rg710.5_632' cx='0.4' cy='0.3' r='0.8'><stop offset='0' stop-color='#e8ecf2'/><stop offset='1' stop-color='#9aa6b4'/></radialGradient></defs><circle r='7.7' fill='url(#rg710.5_632)' stroke='#5f6a76' stroke-width='1'/><circle r='2.6' fill='#d41414'/></svg><svg style='left:722.5px;top:623px' width='18' height='18' viewBox='-9 -9 18 18'><defs><radialGradient id='rg731.5_632' cx='0.4' cy='0.3' r='0.8'><stop offset='0' stop-color='#f4f4f4'/><stop offset='1' stop-color='#c9cdd3'/></radialGradient></defs><circle r='7.7' fill='url(#rg731.5_632)' stroke='#b8bcc2' stroke-width='1'/><path d='M-1.5 -3 L3 0 L-1.5 3 Z' fill='#aaa'/></svg><svg style='left:743.5px;top:623px' width='18' height='18' viewBox='-9 -9 18 18'><defs><radialGradient id='rg752.5_632' cx='0.4' cy='0.3' r='0.8'><stop offset='0' stop-color='#f4f4f4'/><stop offset='1' stop-color='#c9cdd3'/></radialGradient></defs><circle r='7.7' fill='url(#rg752.5_632)' stroke='#b8bcc2' stroke-width='1'/><rect x='-3' y='-3' width='6' height='6' fill='#aaa'/></svg><svg style='left:764.5px;top:623px' width='18' height='18' viewBox='-9 -9 18 18'><defs><radialGradient id='rg773.5_632' cx='0.4' cy='0.3' r='0.8'><stop offset='0' stop-color='#f4f4f4'/><stop offset='1' stop-color='#c9cdd3'/></radialGradient></defs><circle r='7.7' fill='url(#rg773.5_632)' stroke='#b8bcc2' stroke-width='1'/><path d='M-2.5 -2.5 L2.5 2.5 M2.5 -2.5 L-2.5 2.5' stroke='#aaa' stroke-width='1.2'/></svg><svg style='left:785.5px;top:623px' width='18' height='18' viewBox='-9 -9 18 18'><defs><radialGradient id='rg794.5_632' cx='0.4' cy='0.3' r='0.8'><stop offset='0' stop-color='#e8ecf2'/><stop offset='1' stop-color='#9aa6b4'/></radialGradient></defs><circle r='7.7' fill='url(#rg794.5_632)' stroke='#5f6a76' stroke-width='1'/><rect x='-4' y='-2.5' width='8' height='5' fill='none' stroke='#222' stroke-width='1.2'/><rect x='-2' y='-1' width='3' height='2' fill='#c02020'/></svg><svg style='left:806.5px;top:623px' width='18' height='18' viewBox='-9 -9 18 18'><defs><radialGradient id='rg815.5_632' cx='0.4' cy='0.3' r='0.8'><stop offset='0' stop-color='#f4f4f4'/><stop offset='1' stop-color='#c9cdd3'/></radialGradient></defs><circle r='7.7' fill='url(#rg815.5_632)' stroke='#b8bcc2' stroke-width='1'/><ellipse rx='4.5' ry='3' fill='none' stroke='#999' stroke-width='1'/></svg><svg style='left:829.5px;top:623px' width='18' height='18' viewBox='-9 -9 18 18'><defs><radialGradient id='rg838.5_632' cx='0.4' cy='0.3' r='0.8'><stop offset='0' stop-color='#e8ecf2'/><stop offset='1' stop-color='#9aa6b4'/></radialGradient></defs><circle r='7.7' fill='url(#rg838.5_632)' stroke='#5f6a76' stroke-width='1'/><rect x='-3.5' y='-4' width='7' height='8' rx='1' fill='#fff' stroke='#333'/><path d='M-2 -1.5 H2 M-2 0.5 H2 M-2 2.5 H2' stroke='#333'/></svg><svg style='left:854px;top:623px' width='18' height='18' viewBox='-9 -9 18 18'><defs><radialGradient id='rg863_632' cx='0.4' cy='0.3' r='0.8'><stop offset='0' stop-color='#e8ecf2'/><stop offset='1' stop-color='#9aa6b4'/></radialGradient></defs><circle r='7.7' fill='url(#rg863_632)' stroke='#5f6a76' stroke-width='1'/><rect x='-4' y='-4' width='8' height='8' fill='#2a6a2a' stroke='#333'/><circle cx='0' cy='-1' r='2' fill='#a0e070'/></svg>
</body></html>
